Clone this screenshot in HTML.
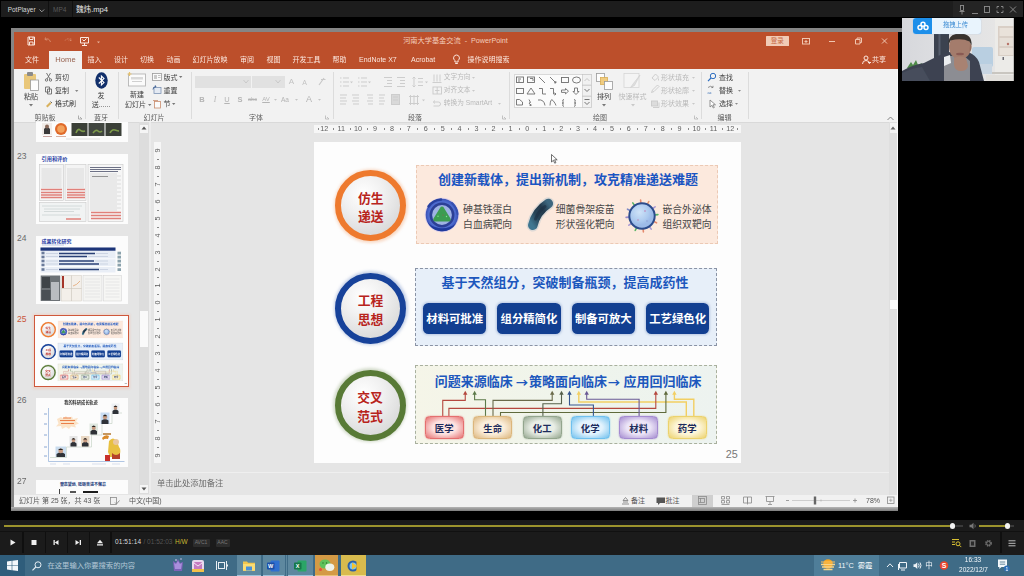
<!DOCTYPE html>
<html lang="zh-CN"><head><meta charset="utf-8"><title>PotPlayer</title><style>
html,body{margin:0;padding:0;background:#000;}
body{width:1024px;height:576px;position:relative;overflow:hidden;font-family:"Liberation Sans","Noto Sans CJK SC",sans-serif;}
.a{position:absolute;box-sizing:border-box;}
svg{position:absolute;overflow:visible;}
.b{font-weight:bold;}
</style></head><body>
<div class="a" style="left:-4px;top:-4px;width:1032px;height:584px;background:#000;filter:blur(0.45px);"><div class="a" style="left:4px;top:4px;width:1024px;height:576px;">
<div class="a" style="left:1px;top:1px;width:1022px;height:16px;background:#1d1d1d;"></div>
<div class="a" style="left:953px;top:1px;width:70px;height:16px;background:#242424;"></div>
<div class="a" style="left:48px;top:1px;width:1px;height:16px;background:#101010;"></div>
<div class="a" style="left:72px;top:1px;width:1px;height:16px;background:#101010;"></div>
<div class="a" style="top:5.50px;font-size:6.4px;line-height:8.4px;color:#d8d8d8;white-space:nowrap;left:7.8px;">PotPlayer</div>
<svg style="left:38.500px;top:8.500px" width="6" height="4" viewBox="0 0 6 4"><path d="M0.5 0.5 L2.800 2.800 L5.100 0.5" fill="none" stroke="#9a9a9a" stroke-width="1"/></svg>
<div class="a" style="top:5.75px;font-size:6.5px;line-height:8.5px;color:#5a5a5a;white-space:nowrap;left:53px;">MP4</div>
<div class="a" style="top:4.80px;font-size:7.6px;line-height:9.6px;color:#e4e4e4;white-space:nowrap;left:76px;">魏炜.mp4</div>
<svg style="left:955px;top:4px" width="64" height="12" viewBox="0 0 64 12">
<g stroke="#8e8e8e" stroke-width="0.900" fill="none">
<path d="M5 1.5h4M5.5 1.5v5h3v-5M4.5 7.5h5M7 7.5v3"/>
<path d="M17 9.5h6"/>
<rect x="29.5" y="2.5" width="5" height="6"/>
<path d="M42 4.5v-2h2M48 4.5v-2h-2M42 6.500v2h2M48 6.5v2h-2"/>
<path d="M55 2.500l6 6M61 2.500l-6 6"/>
</g></svg>
<div class="a" style="left:-4px;top:520px;width:1032px;height:35px;background:#1b1b1b;"></div>
<div class="a" style="left:-4px;top:531px;width:1032px;height:1px;background:#111;"></div>
<div class="a" style="left:4px;top:525px;width:949px;height:1.8px;background:#9c932d;"></div>
<div class="a" style="left:953px;top:525px;width:10px;height:2px;background:#3a3a3a;"></div>
<div class="a" style="left:949.5px;top:523.2px;width:5.6px;height:5.6px;background:#f2f2f2;border-radius:50%;"></div>
<svg style="left:969px;top:522px" width="8" height="8" viewBox="0 0 8 8"><path d="M0.500 2.800h1.800l2.200-2v6.400l-2.200-2h-1.800z" fill="#777"/><path d="M5.800 2.500q1 1.500 0 3" stroke="#777" fill="none" stroke-width="0.800"/></svg>
<div class="a" style="left:979px;top:525px;width:29px;height:1.8px;background:#9c932d;"></div>
<div class="a" style="left:1008px;top:525px;width:6px;height:2px;background:#3a3a3a;"></div>
<div class="a" style="left:1004.5px;top:523.2px;width:5.6px;height:5.6px;background:#f2f2f2;border-radius:50%;"></div>
<div class="a" style="left:22px;top:532px;width:1.5px;height:21px;background:#0f0f0f;"></div>
<div class="a" style="left:44.5px;top:532px;width:1.5px;height:21px;background:#0f0f0f;"></div>
<div class="a" style="left:66.5px;top:532px;width:1.5px;height:21px;background:#0f0f0f;"></div>
<div class="a" style="left:88.5px;top:532px;width:1.5px;height:21px;background:#0f0f0f;"></div>
<div class="a" style="left:110px;top:532px;width:1.5px;height:21px;background:#0f0f0f;"></div>
<div class="a" style="left:1000px;top:532px;width:1.5px;height:21px;background:#0f0f0f;"></div>
<svg style="left:0;top:532px" width="112" height="21" viewBox="0 0 112 21">
<g fill="#f0f0f0">
<path d="M10.500 7.500v6l5-3z"/>
<rect x="31.500" y="8" width="5" height="5"/>
<path d="M53.500 8h1.300v5h-1.300zM58.500 8v5l-3.700-2.500z"/>
<path d="M79.700 8h1.300v5h-1.300zM75.500 8v5l3.700-2.500z"/>
<path d="M97 11.200h6l-3-3.400zM97 12.200h6v1.200h-6z"/>
</g></svg>
<div class="a" style="top:538.45px;font-size:6.5px;line-height:8.5px;color:#dcdcdc;white-space:nowrap;left:115px;letter-spacing:0.1px;">01:51:14</div>
<div class="a" style="top:538.45px;font-size:6.5px;line-height:8.5px;color:#555;white-space:nowrap;left:143.5px;">/ 01:52:03</div>
<div class="a" style="top:538.45px;font-size:6.5px;line-height:8.5px;color:#c8b832;white-space:nowrap;left:175px;">H/W</div>
<div class="a" style="left:192.5px;top:538.5px;width:17px;height:8px;background:#2c2c2c;border-radius:1px;"></div>
<div class="a" style="top:539.20px;font-size:5px;line-height:7px;color:#777;white-space:nowrap;left:51px;width:300px;text-align:center;">AVC1</div>
<div class="a" style="left:215.5px;top:538.5px;width:14px;height:8px;background:#2c2c2c;border-radius:1px;"></div>
<div class="a" style="top:539.20px;font-size:5px;line-height:7px;color:#777;white-space:nowrap;left:72.5px;width:300px;text-align:center;">AAC</div>
<svg style="left:948px;top:536px" width="72" height="14" viewBox="0 0 72 14">
<g fill="none" stroke="#d8c032" stroke-width="1"><path d="M4 3.500h7M4 6h3M4 8.500h3"/><circle cx="10" cy="7.800" r="2"/><path d="M11.500 9.300l1.800 1.800"/></g>
<rect x="21.500" y="4" width="6" height="7" fill="#6f6f6f"/><rect x="23" y="5.500" width="3" height="4" fill="#2a2a2a"/>
<circle cx="40.500" cy="7.300" r="2.600" fill="none" stroke="#6f6f6f" stroke-width="1.600" stroke-dasharray="1.400 0.700"/><circle cx="40.500" cy="7.300" r="1.800" fill="none" stroke="#6f6f6f" stroke-width="1"/>
<path d="M60.500 4.800h7M60.500 7.300h7M60.500 9.800h7" stroke="#bdbdbd" stroke-width="1"/>
</svg>
<div class="a" style="left:-4px;top:555px;width:1032px;height:25px;background:#3f6b86;"></div>
<div class="a" style="left:-4px;top:555px;width:29px;height:25px;background:#2f5d7b;"></div>
<svg style="left:7px;top:560px" width="11" height="11" viewBox="0 0 11 11"><path d="M0 1.500l4.700-0.700v4.400h-4.700zM5.300 0.700l5.700-0.700v5.200h-5.700zM0 5.800h4.700v4.400l-4.700-0.700zM5.300 5.800h5.700v5.200l-5.700-0.700z" fill="#f4f7fa"/></svg>
<svg style="left:32px;top:560.5px" width="10" height="10" viewBox="0 0 10 10"><circle cx="6" cy="3.800" r="3" fill="none" stroke="#e6eef4" stroke-width="1"/><path d="M3.800 6l-3.300 3.400" stroke="#e6eef4" stroke-width="1.100"/></svg>
<div class="a" style="top:560.85px;font-size:7.3px;line-height:9.3px;color:#b4c8d6;white-space:nowrap;left:47.5px;">在这里输入你要搜索的内容</div>
<svg style="left:170px;top:557px" width="36" height="18" viewBox="0 0 36 18"><path d="M3 4l3 2 2-4 2 4 3-1-1 9h-8z" fill="#7d62b8"/><path d="M4 6l2 1 2-3 2 3 2-1-1 6h-6z" fill="#a98fdc"/><circle cx="6" cy="3" r="0.800" fill="#e8d9ff"/><circle cx="11" cy="2" r="0.700" fill="#e8d9ff"/><rect x="22" y="3" width="12" height="12" rx="2" fill="#e9d9ee"/><rect x="24" y="5" width="8" height="8" rx="1" fill="#c57bc0"/><path d="M24 6l4 3 4-3" stroke="#fff" fill="none" stroke-width="0.800"/><rect x="22" y="12" width="12" height="3" fill="#f2c14a"/></svg>
<svg style="left:216px;top:560px" width="12" height="11" viewBox="0 0 12 11"><g fill="none" stroke="#e8eef3" stroke-width="1"><rect x="2.500" y="2.500" width="6" height="6"/><path d="M0.500 1v9M10.500 1v9M11.500 4.500v2"/></g></svg>
<div class="a" style="left:237px;top:555px;width:24px;height:21px;background:#5e889f;"><svg style="left:6px;top:5px" width="12" height="11" viewBox="0 0 12 11"><path d="M0 1.500h4l1 1.200h7v8h-12z" fill="#f3c64d"/><path d="M0 4h12v6.700h-12z" fill="#fbdc74"/><rect x="3" y="6.500" width="6" height="4" fill="#4a90d9"/></svg></div>
<div class="a" style="left:262.5px;top:555px;width:21px;height:21px;background:#5e889f;"><svg style="left:4px;top:4.500px" width="13" height="12" viewBox="0 0 13 12"><rect x="3.500" y="0.500" width="9" height="11" rx="1" fill="#2f6fd0"/><rect x="0" y="2.500" width="7.500" height="7" rx="0.800" fill="#1a4fa8"/><text x="3.700" y="8.300" font-size="5.500" font-weight="bold" fill="#fff" text-anchor="middle" font-family="Liberation Sans, sans-serif">W</text></svg></div>
<div class="a" style="left:262px;top:555px;width:0.8px;height:21px;background:#3c6a86;"></div>
<div class="a" style="left:288px;top:555px;width:25px;height:21px;background:#5e889f;"><svg style="left:6px;top:4.500px" width="13" height="12" viewBox="0 0 13 12"><rect x="3.500" y="0.500" width="9" height="11" rx="1" fill="#2aa567"/><rect x="0" y="2.500" width="7.500" height="7" rx="0.800" fill="#16794a"/><text x="3.700" y="8.300" font-size="5.500" font-weight="bold" fill="#fff" text-anchor="middle" font-family="Liberation Sans, sans-serif">X</text></svg></div>
<div class="a" style="left:284px;top:555px;width:1px;height:21px;background:#5e889f;"></div>
<div class="a" style="left:286px;top:555px;width:1px;height:21px;background:#5e889f;"></div>
<div class="a" style="left:314.5px;top:555px;width:23px;height:21px;background:#d49a45;"><svg style="left:4px;top:4px" width="16" height="13" viewBox="0 0 16 13"><ellipse cx="6" cy="5" rx="5.500" ry="4.600" fill="#5fc25a"/><ellipse cx="10.800" cy="8.300" rx="4.500" ry="3.700" fill="#eef3ea"/><circle cx="4" cy="4" r="0.700" fill="#2d6e2b"/><circle cx="7.500" cy="4" r="0.700" fill="#2d6e2b"/><circle cx="1.500" cy="10.500" r="1.500" fill="#e2523c"/></svg></div>
<div class="a" style="left:341px;top:555px;width:25px;height:21px;background:#d8bb4e;"><svg style="left:6px;top:3.500px" width="14" height="14" viewBox="0 0 14 14"><circle cx="6" cy="7" r="5.500" fill="#2b5fa8"/><circle cx="6" cy="7" r="3.500" fill="#7fc4f0"/><path d="M5 3.500v7l5-3.500z" fill="#f2c230"/><rect x="9.500" y="3" width="3.500" height="10" fill="#e6b833"/></svg></div>
<div class="a" style="left:314.5px;top:574.5px;width:23px;height:1.5px;background:#e8c27a;"></div>
<div class="a" style="left:341px;top:574.5px;width:25px;height:1.5px;background:#f0de90;"></div>
<div class="a" style="left:237px;top:574.8px;width:24px;height:1.2px;background:#9cc3dc;"></div>
<div class="a" style="left:263px;top:574.8px;width:21px;height:1.2px;background:#9cc3dc;"></div>
<div class="a" style="left:288px;top:574.8px;width:25px;height:1.2px;background:#9cc3dc;"></div>
<div class="a" style="left:814px;top:555px;width:65px;height:21px;background:#4f7e99;"></div>
<svg style="left:820px;top:558px" width="16" height="14" viewBox="0 0 16 14"><circle cx="8" cy="6" r="4.800" fill="#f5a623"/><path d="M1 6.500h14M2 9h12M3.500 11.500h9" stroke="#f7d58a" stroke-width="1.300"/><path d="M1 4h14" stroke="#f9c260" stroke-width="1"/></svg>
<div class="a" style="top:560.85px;font-size:7.3px;line-height:9.3px;color:#f4f8fb;white-space:nowrap;left:838px;">11°C&nbsp;&nbsp;雾霾</div>
<svg style="left:885px;top:559px" width="70" height="13" viewBox="0 0 70 13"><g fill="none" stroke="#eef3f7" stroke-width="1"><path d="M2 8l3-3.200 3 3.200"/><path d="M14.500 3.500h7v5.500h-7zM16 11h4M13.500 5v6"/><path d="M28.500 5.200h1.600l2.200-2v6.800l-2.200-2h-1.600z" fill="#eef3f7" stroke="none"/><path d="M33.500 4.600q1.200 1.900 0 3.800M35 3.500q2 3 0 6"/></g><circle cx="59" cy="6.500" r="4.300" fill="#e8452c"/><text x="59" y="9" font-size="7" font-weight="bold" fill="#fff" text-anchor="middle" font-family="Liberation Sans, sans-serif">S</text></svg>
<div class="a" style="top:560.55px;font-size:7.5px;line-height:9.5px;color:#f4f8fb;white-space:nowrap;left:779px;width:300px;text-align:center;">中</div>
<div class="a" style="top:556.45px;font-size:6.5px;line-height:8.5px;color:#f4f8fb;white-space:nowrap;left:823px;width:300px;text-align:center;">16:33</div>
<div class="a" style="top:566.05px;font-size:6.5px;line-height:8.5px;color:#f4f8fb;white-space:nowrap;left:823.5px;width:300px;text-align:center;">2022/12/7</div>
<svg style="left:997px;top:559px" width="14" height="13" viewBox="0 0 14 13"><path d="M1 0.500h9v7.500h-5.500l-2.200 2v-2h-1.300z" fill="#f4f8fb"/><path d="M2.800 3h5.400M2.800 5.200h5.400" stroke="#3f6b86" stroke-width="0.800"/><circle cx="9.800" cy="9.500" r="3" fill="#2d6fb5"/><text x="9.800" y="11.500" font-size="5" fill="#fff" text-anchor="middle" font-family="Liberation Sans, sans-serif">1</text></svg>
<div class="a" style="left:10.7px;top:28px;width:891.3px;height:3.6px;background:#858585;"></div>
<div class="a" style="left:10.7px;top:28px;width:3.5px;height:483px;background:#858585;"></div>
<div class="a" style="left:10.7px;top:507px;width:887.3px;height:4px;background:linear-gradient(#b5b5b5,#7d7d7d);"></div>
<div class="a" style="left:14px;top:31.5px;width:884px;height:475.5px;background:#e5e5e5;"></div>
<div class="a" style="left:14px;top:31.5px;width:884px;height:37.5px;background:#bc4f2b;"></div>
<div class="a" style="left:14px;top:69px;width:884px;height:52.5px;background:#f2f2f2;"></div>
<div class="a" style="left:14px;top:121.5px;width:884px;height:1px;background:#d9d9d9;"></div>
<div class="a" style="left:14px;top:494.5px;width:884px;height:12.5px;background:#f1f1f1;"></div>
<svg style="left:26px;top:35px" width="80" height="12" viewBox="0 0 80 12">
<g fill="none" stroke="#fbe9e0" stroke-width="1">
<path d="M2 2h6.500l0 8h-6.500z"/><path d="M3.500 2v2.500h3.500v-2.500M3.500 10v-3h3.500v3"/>
<g stroke="#d98a6a"><path d="M19 4.500q4-2 5.500 2.500M19 4.500l0.500-2M19 4.500l2.200 0.600"/>
<path d="M45 5.500q-3-3.500-6.500 0.500M45 5.500l-0.300-2.300M45 5.500l-2.300 0.200" stroke-dasharray="1 0.800"/></g>
<path d="M54.500 2.500h8v5.500h-8zM58.500 8v2.200M56 10.500h5M56.500 4.500l1.500 1.500 2.500-2.500"/>
</g><path d="M71 6.500h3l-1.500 1.800z" fill="#e9b49d"/></svg>
<div class="a" style="top:35.70px;font-size:7.2px;line-height:9.2px;color:#f3cdbb;white-space:nowrap;left:305.5px;width:300px;text-align:center;">河南大学基金交流&nbsp; -&nbsp; PowerPoint</div>
<div class="a" style="left:765.5px;top:35.5px;width:23.3px;height:10.5px;background:#f1cbb6;border-radius:0.500px;"></div>
<div class="a" style="top:36.75px;font-size:6.5px;line-height:8.5px;color:#c86a45;white-space:nowrap;left:627.2px;width:300px;text-align:center;">登录</div>
<svg style="left:800px;top:35px" width="92" height="13" viewBox="0 0 92 13">
<g fill="none" stroke="#f0c6b0" stroke-width="1">
<rect x="2.500" y="3.500" width="7" height="5.500"/><path d="M4.500 6.500h3M6 5v3"/>
<path d="M29 6.500h6"/>
<path d="M55.500 4.500h4.500v4.500h-4.500zM57 4.500v-1.500h4.500v4.500h-1.500"/>
<path d="M82 3.500l5 5M87 3.500l-5 5"/>
</g></svg>
<div class="a" style="left:49px;top:51px;width:33px;height:18.5px;background:#f2f2f2;"></div>
<div class="a" style="top:55.00px;font-size:7px;line-height:9px;color:#fbe7de;white-space:nowrap;left:25px;">文件</div>
<div class="a" style="top:55.00px;font-size:7px;line-height:9px;color:#fbe7de;white-space:nowrap;left:87.5px;">插入</div>
<div class="a" style="top:55.00px;font-size:7px;line-height:9px;color:#fbe7de;white-space:nowrap;left:114px;">设计</div>
<div class="a" style="top:55.00px;font-size:7px;line-height:9px;color:#fbe7de;white-space:nowrap;left:140px;">切换</div>
<div class="a" style="top:55.00px;font-size:7px;line-height:9px;color:#fbe7de;white-space:nowrap;left:166.5px;">动画</div>
<div class="a" style="top:55.00px;font-size:7px;line-height:9px;color:#fbe7de;white-space:nowrap;left:192.5px;">幻灯片放映</div>
<div class="a" style="top:55.00px;font-size:7px;line-height:9px;color:#fbe7de;white-space:nowrap;left:240px;">审阅</div>
<div class="a" style="top:55.00px;font-size:7px;line-height:9px;color:#fbe7de;white-space:nowrap;left:266.5px;">视图</div>
<div class="a" style="top:55.00px;font-size:7px;line-height:9px;color:#fbe7de;white-space:nowrap;left:292.5px;">开发工具</div>
<div class="a" style="top:55.00px;font-size:7px;line-height:9px;color:#fbe7de;white-space:nowrap;left:332.5px;">帮助</div>
<div class="a" style="top:55.00px;font-size:7px;line-height:9px;color:#fbe7de;white-space:nowrap;left:359px;">EndNote X7</div>
<div class="a" style="top:55.00px;font-size:7px;line-height:9px;color:#fbe7de;white-space:nowrap;left:411px;">Acrobat</div>
<div class="a" style="top:55.00px;font-size:7px;line-height:9px;color:#fbe7de;white-space:nowrap;left:467.5px;">操作说明搜索</div>
<div class="a" style="top:54.70px;font-size:7.6px;line-height:9.6px;color:#96614e;white-space:nowrap;left:-84.5px;width:300px;text-align:center;">Home</div>
<svg style="left:452px;top:54px" width="9" height="11" viewBox="0 0 9 11"><path d="M4.500 1a3 3 0 0 1 1.600 5.500v1.500h-3.200v-1.500a3 3 0 0 1 1.600-5.500zM3.200 9.500h2.600" fill="none" stroke="#fbe7de" stroke-width="1"/></svg>
<svg style="left:860.500px;top:55px" width="10" height="10" viewBox="0 0 10 10"><circle cx="5" cy="3" r="2" fill="none" stroke="#fbe7de" stroke-width="1"/><path d="M1.500 9q0-3.500 3.500-3.500t3.500 3.500M7 7.500h3" fill="none" stroke="#fbe7de" stroke-width="1"/></svg>
<div class="a" style="top:55.20px;font-size:7px;line-height:9px;color:#fbe7de;white-space:nowrap;left:872px;">共享</div>
<div class="a" style="left:85px;top:72px;width:1px;height:47px;background:#dcdcdc;"></div>
<div class="a" style="left:117.5px;top:72px;width:1px;height:47px;background:#dcdcdc;"></div>
<div class="a" style="left:190.5px;top:72px;width:1px;height:47px;background:#dcdcdc;"></div>
<div class="a" style="left:332.5px;top:72px;width:1px;height:47px;background:#dcdcdc;"></div>
<div class="a" style="left:509px;top:72px;width:1px;height:47px;background:#dcdcdc;"></div>
<div class="a" style="left:701px;top:72px;width:1px;height:47px;background:#dcdcdc;"></div>
<div class="a" style="left:747.5px;top:72px;width:1px;height:47px;background:#dcdcdc;"></div>
<svg style="left:23px;top:71px" width="17" height="21" viewBox="0 0 17 21"><rect x="1" y="3" width="12" height="15" rx="1" fill="#e9c77a"/><rect x="4" y="1" width="6" height="4" rx="1" fill="#8a8a8a"/><rect x="7.500" y="9" width="8" height="10.500" fill="#fdfdfd" stroke="#9a9a9a" stroke-width="0.800"/></svg>
<div class="a" style="top:91.80px;font-size:7px;line-height:9px;color:#3e3e3e;white-space:nowrap;left:-119px;width:300px;text-align:center;">粘贴</div>
<svg style="left:29px;top:104px" width="4" height="3"><path d="M0 0h4l-2 2.500z" fill="#777"/></svg>
<svg style="left:44px;top:72px" width="9" height="38" viewBox="0 0 9 38"><g fill="none" stroke="#6a6a6a" stroke-width="0.900"><path d="M2.500 1l3.500 6M6.500 1l-3.500 6"/><circle cx="2.500" cy="8" r="1.200"/><circle cx="6.500" cy="8" r="1.200"/><path d="M1.500 15h4v5h-4zM3.500 17h4v5h-4z" fill="#f7f7f7"/></g><path d="M2 34l4-4 1.500 1.500-4 4z" fill="#d9b25e"/><path d="M6.500 29.500l1.500 1.500" stroke="#6a6a6a"/></svg>
<div class="a" style="top:72.50px;font-size:7px;line-height:9px;color:#3e3e3e;white-space:nowrap;left:55px;">剪切</div>
<div class="a" style="top:85.80px;font-size:7px;line-height:9px;color:#3e3e3e;white-space:nowrap;left:55px;">复制</div>
<div class="a" style="top:99.20px;font-size:7px;line-height:9px;color:#3e3e3e;white-space:nowrap;left:55px;">格式刷</div>
<svg style="left:75px;top:89.500px" width="4" height="3"><path d="M0 0h3.400l-1.700 2z" fill="#888"/></svg>
<div class="a" style="top:112.80px;font-size:7px;line-height:9px;color:#5c5c5c;white-space:nowrap;left:-105px;width:300px;text-align:center;">剪贴板</div>
<svg style="left:78px;top:115px" width="5" height="5"><path d="M0.500 0.500v3.500h3.500M2 2l2 2" fill="none" stroke="#9a9a9a" stroke-width="0.800"/></svg>
<svg style="left:94.500px;top:71.500px" width="13" height="17" viewBox="0 0 13 17"><ellipse cx="6.500" cy="8.500" rx="6.200" ry="8.300" fill="#12306b"/><path d="M3.800 5.500l5.200 5-2.600 2.500v-9l2.600 2.500-5.200 5" fill="none" stroke="#fff" stroke-width="1.100"/></svg>
<div class="a" style="top:91.20px;font-size:7px;line-height:9px;color:#3e3e3e;white-space:nowrap;left:-49px;width:300px;text-align:center;">发</div>
<div class="a" style="top:100.00px;font-size:7px;line-height:9px;color:#3e3e3e;white-space:nowrap;left:-49px;width:300px;text-align:center;">送......</div>
<div class="a" style="top:112.80px;font-size:7px;line-height:9px;color:#5c5c5c;white-space:nowrap;left:-49px;width:300px;text-align:center;">蓝牙</div>
<svg style="left:127px;top:72px" width="20" height="15" viewBox="0 0 20 15"><rect x="1.500" y="2" width="17" height="12" fill="#fbfbfb" stroke="#b5b5b5" stroke-width="0.900"/><rect x="4" y="5" width="12" height="2.500" fill="#d9d9d9"/><rect x="5" y="9" width="10" height="1" fill="#d0d0d0"/><path d="M2.500 0v4M0.500 2h4" stroke="#e7c26d" stroke-width="1.200"/></svg>
<div class="a" style="top:90.20px;font-size:7px;line-height:9px;color:#3e3e3e;white-space:nowrap;left:-13px;width:300px;text-align:center;">新建</div>
<div class="a" style="top:100.00px;font-size:7px;line-height:9px;color:#3e3e3e;white-space:nowrap;left:-14.5px;width:300px;text-align:center;">幻灯片</div>
<svg style="left:147.500px;top:104px" width="4" height="3"><path d="M0 0h3.400l-1.700 2z" fill="#777"/></svg>
<svg style="left:152px;top:72px" width="10" height="38" viewBox="0 0 10 38"><rect x="0.500" y="1.500" width="9" height="7" fill="#fafafa" stroke="#9c9c9c" stroke-width="0.800"/><rect x="2" y="3" width="3" height="4" fill="#c9c9c9"/><path d="M6 3.500h2.500M6 5.500h2.500" stroke="#aaa" stroke-width="0.700"/><rect x="2" y="15.500" width="7" height="6" fill="#e4eaf3" stroke="#7d93b3" stroke-width="0.800"/><path d="M1 17.500a3 3 0 0 1 3-3l-0.800-1.200M4 14.500l-1.300 0.900" fill="none" stroke="#3c5f94" stroke-width="0.900"/><rect x="2.500" y="29.500" width="6" height="6.500" fill="#fbfbfb" stroke="#c98c6d" stroke-width="0.800"/><path d="M1 28.500h5" stroke="#c98c6d" stroke-width="0.800"/></svg>
<div class="a" style="top:72.50px;font-size:7px;line-height:9px;color:#3e3e3e;white-space:nowrap;left:163.5px;">版式</div>
<div class="a" style="top:85.80px;font-size:7px;line-height:9px;color:#3e3e3e;white-space:nowrap;left:163.5px;">重置</div>
<div class="a" style="top:99.20px;font-size:7px;line-height:9px;color:#3e3e3e;white-space:nowrap;left:163.5px;">节</div>
<svg style="left:179px;top:76px" width="4" height="3"><path d="M0 0h3.400l-1.700 2z" fill="#777"/></svg>
<svg style="left:172px;top:103px" width="4" height="3"><path d="M0 0h3.400l-1.700 2z" fill="#777"/></svg>
<div class="a" style="top:112.80px;font-size:7px;line-height:9px;color:#5c5c5c;white-space:nowrap;left:4px;width:300px;text-align:center;">幻灯片</div>
<div class="a" style="left:195px;top:75.5px;width:56px;height:12.5px;background:#e1e1e1;"></div>
<div class="a" style="left:252px;top:75.5px;width:32.5px;height:12.5px;background:#e1e1e1;"></div>
<svg style="left:243px;top:79px" width="40" height="6" viewBox="0 0 40 6"><path d="M0.500 1l2.500 3 2.500-3M32.500 1l2.500 3 2.500-3" fill="none" stroke="#c6c6c6" stroke-width="0.900"/></svg>
<div class="a" style="top:77.00px;font-size:8px;line-height:10px;color:#c2c2c2;white-space:nowrap;left:141.5px;width:300px;text-align:center;">A</div>
<div class="a" style="top:78.00px;font-size:7px;line-height:9px;color:#c2c2c2;white-space:nowrap;left:154.5px;width:300px;text-align:center;">A</div>
<svg style="left:317px;top:77px" width="10" height="9" viewBox="0 0 10 9"><path d="M2 8l5-7M4 2.500h4.500" stroke="#c8c8c8" stroke-width="1.200" fill="none"/></svg>
<div class="a" style="top:94.75px;font-size:7.5px;line-height:9.5px;color:#b4b4b4;white-space:nowrap;left:52px;width:300px;text-align:center;font-weight:bold;">B</div>
<div class="a" style="top:94.75px;font-size:7.5px;line-height:9.5px;color:#b4b4b4;white-space:nowrap;left:65px;width:300px;text-align:center;font-style:italic;font-family:'Liberation Serif',serif;">I</div>
<div class="a" style="top:94.75px;font-size:7.5px;line-height:9.5px;color:#b4b4b4;white-space:nowrap;left:77px;width:300px;text-align:center;text-decoration:underline;">U</div>
<div class="a" style="top:94.75px;font-size:7.5px;line-height:9.5px;color:#b4b4b4;white-space:nowrap;left:90px;width:300px;text-align:center;font-weight:bold;">S</div>
<div class="a" style="top:94.75px;font-size:7.5px;line-height:9.5px;color:#b4b4b4;white-space:nowrap;left:102.5px;width:300px;text-align:center;text-decoration:line-through;font-size:5.500px;">abc</div>
<div class="a" style="top:94.75px;font-size:7.5px;line-height:9.5px;color:#b4b4b4;white-space:nowrap;left:116px;width:300px;text-align:center;font-size:6px;text-decoration:underline;">AV</div>
<div class="a" style="top:94.75px;font-size:7.5px;line-height:9.5px;color:#b4b4b4;white-space:nowrap;left:135px;width:300px;text-align:center;font-size:6.500px;">Aa</div>
<div class="a" style="top:94.75px;font-size:7.5px;line-height:9.5px;color:#b4b4b4;white-space:nowrap;left:159px;width:300px;text-align:center;font-size:9px;">A</div>
<svg style="left:274px;top:99px" width="4" height="3"><path d="M0 0h3l-1.500 1.800z" fill="#c4c4c4"/></svg>
<svg style="left:294.5px;top:99px" width="4" height="3"><path d="M0 0h3l-1.500 1.800z" fill="#c4c4c4"/></svg>
<svg style="left:318px;top:99px" width="4" height="3"><path d="M0 0h3l-1.500 1.800z" fill="#c4c4c4"/></svg>
<div class="a" style="top:112.80px;font-size:7px;line-height:9px;color:#5c5c5c;white-space:nowrap;left:106px;width:300px;text-align:center;">字体</div>
<svg style="left:325px;top:115px" width="5" height="5"><path d="M0.500 0.500v3.500h3.500M2 2l2 2" fill="none" stroke="#b5b5b5" stroke-width="0.800"/></svg>
<svg style="left:337px;top:74px" width="170" height="36" viewBox="0 0 170 36"><g stroke="#cdcdcd" stroke-width="1" fill="none"><path d="M3 4h1.500M3 8h1.500M3 12h1.500M6 4h6M6 8h6M6 12h6"/><path d="M21 4h1.500M21 8h1.500M21 12h1.500M24 4h6M24 8h6M24 12h6"/><path d="M47 3.500h8M50 6.500h5M50 9.500h5M47 12.500h8"/><path d="M60 3.500h8M63 6.500h5M63 9.500h5M60 12.500h8"/><path d="M77 3v10M75.500 4.500l1.500-1.500 1.500 1.500M75.500 11.500l1.500 1.500 1.500-1.500M81 4.500h5M81 8h5M81 11.500h5"/><path d="M3 21h7M3 24h6M3 27h7M3 30h6"/><path d="M15 21h7M16 24h6M15 27h7M16 30h6"/><path d="M30 21h6M31 24h5M30 27h6M31 30h5"/><path d="M42 21h6M42 24h5M42 27h6M42 30h5"/><rect x="54.500" y="20.500" width="8" height="10" fill="#d9d9d9"/><path d="M56 23h5M56 26h5"/><path d="M73.500 21v10M77 21v10M80.500 21v10M72 22.500h10M72 29.500h10"/></g><path d="M13 7.500h3l-1.500 1.800zM31 7.500h3l-1.500 1.800zM88 7.500h3l-1.500 1.800zM85 25.500h3l-1.500 1.800z" fill="#c9c9c9"/></svg>
<svg style="left:431.500px;top:73px" width="11" height="36" viewBox="0 0 11 36"><g fill="none" stroke="#c9c9c9" stroke-width="0.900"><path d="M2 1.500v7M5 1.500v7M8 1.500v7M0.500 9.500h9"/><rect x="1" y="14" width="8.500" height="7"/><path d="M5.200 14v7M3 17.500h4.500"/><path d="M1.500 29h5a2 2 0 0 1 0 4h-5M3 27.500l-1.700 1.500 1.700 1.500"/></g></svg>
<div class="a" style="top:72.65px;font-size:6.7px;line-height:8.7px;color:#b9b9b9;white-space:nowrap;left:443.8px;">文字方向</div>
<div class="a" style="top:85.95px;font-size:6.7px;line-height:8.7px;color:#b9b9b9;white-space:nowrap;left:443.8px;">对齐文本</div>
<div class="a" style="top:99.35px;font-size:6.7px;line-height:8.7px;color:#b9b9b9;white-space:nowrap;left:443.8px;">转换为 SmartArt</div>
<svg style="left:472px;top:76.5px" width="4" height="3"><path d="M0 0h3l-1.500 1.800z" fill="#c9c9c9"/></svg>
<svg style="left:472px;top:89.8px" width="4" height="3"><path d="M0 0h3l-1.500 1.800z" fill="#c9c9c9"/></svg>
<svg style="left:497.5px;top:103.2px" width="4" height="3"><path d="M0 0h3l-1.500 1.800z" fill="#c9c9c9"/></svg>
<div class="a" style="top:112.80px;font-size:7px;line-height:9px;color:#5c5c5c;white-space:nowrap;left:265px;width:300px;text-align:center;">段落</div>
<svg style="left:502px;top:115px" width="5" height="5"><path d="M0.500 0.500v3.500h3.500M2 2l2 2" fill="none" stroke="#b5b5b5" stroke-width="0.800"/></svg>
<div class="a" style="left:514px;top:74px;width:77.5px;height:33.5px;background:#fbfbfb;border:0.700px solid #d8d8d8;"></div>
<svg style="left:514px;top:74px" width="78" height="34" viewBox="0 0 78 34"><g fill="none" stroke="#6e6e6e" stroke-width="0.900">
<rect x="2.500" y="3" width="7" height="5.500"/><path d="M4 5h3M4 7h2"/><rect x="13.500" y="3" width="7" height="5.500"/><path d="M16 4.500h3v2.500"/>
<path d="M25 3l6 6M36 3l6 6M42 9l-0.300-2M42 9l-2-0.300"/><rect x="47.500" y="3.500" width="7" height="5"/><ellipse cx="62.500" cy="6" rx="4" ry="3"/>
<rect x="2.500" y="14.500" width="7" height="5"/><path d="M17 14l4 6h-8z"/><path d="M25 14.500h3.500v5.500h3.500M36 14.500h3.500v5.500h2.500M42 20l-1.500-1.200M42 20l-1.500 1.200"/>
<path d="M47.500 16h4v-1.500l3 2.700-3 2.700v-1.500h-4z"/><path d="M60.500 14h3v3.500h1.500l-3 3-3-3h1.500z"/>
<path d="M2.500 31v-5.500h3l3 2.500v3z"/><path d="M15 25.500l1.500 3-1.500 0.500 2 2.500M17 31.500l-0.300-1.500M17 31.500l-1.500-0.200"/><path d="M24 26q6-1 7 5.500M36 31.500q0.500-8 3-5t3 5M50 25.500q-2 0-1 2t-1 1.500q2 0 1 1.500t1 2M60 25.500q2 0 1 2t1 1.500q-2 0-1 1.500t-1 2"/>
</g><g fill="#f1f1f1" stroke="#c4c4c4" stroke-width="0.600"><rect x="68.500" y="0.500" width="9" height="10.500"/><rect x="68.500" y="11.500" width="9" height="10.500"/><rect x="68.500" y="22.500" width="9" height="11"/></g>
<path d="M70.500 7l2.500-2.500 2.500 2.500" fill="none" stroke="#c2c2c2" stroke-width="0.900"/><path d="M70.500 15l2.500 2.500 2.500-2.500M70.500 28l2.500 2.500 2.500-2.500M70.500 25.500h5" fill="none" stroke="#666" stroke-width="0.900"/></svg>
<svg style="left:595px;top:72px" width="18" height="19" viewBox="0 0 18 19"><rect x="1.500" y="1.500" width="8" height="8" fill="#fdfdfd" stroke="#9a9a9a" stroke-width="0.800"/><rect x="5.500" y="5.500" width="7" height="7" fill="#f0cc80" stroke="#d9ad55" stroke-width="0.800"/><rect x="9.500" y="9.500" width="8" height="8" fill="#fdfdfd" stroke="#9a9a9a" stroke-width="0.800"/></svg>
<div class="a" style="top:91.80px;font-size:7px;line-height:9px;color:#3e3e3e;white-space:nowrap;left:454px;width:300px;text-align:center;">排列</div>
<svg style="left:602px;top:104px" width="4" height="3"><path d="M0 0h4l-2 2.500z" fill="#777"/></svg>
<svg style="left:622px;top:72px" width="21" height="20" viewBox="0 0 21 20"><rect x="2" y="1.500" width="15" height="14" fill="#f4f4f4" stroke="#d6d6d6" stroke-width="0.800"/><path d="M18 3l-7 9-2.500 3.500 4-2z" fill="#dedede" stroke="#cfcfcf" stroke-width="0.600"/></svg>
<div class="a" style="top:91.80px;font-size:7px;line-height:9px;color:#b9b9b9;white-space:nowrap;left:482.5px;width:300px;text-align:center;">快速样式</div>
<svg style="left:631px;top:104px" width="4" height="3"><path d="M0 0h4l-2 2.500z" fill="#c9c9c9"/></svg>
<svg style="left:650px;top:72px" width="10" height="38" viewBox="0 0 10 38"><g fill="none" stroke="#c9c9c9" stroke-width="0.900"><path d="M2 6l3.500-4 3 3-3.500 3.500zM8.500 6.500v2"/><path d="M1.500 20.500l1-2.500 5-5 1.500 1.500-5 5z"/><rect x="1.500" y="29" width="6" height="5" fill="#dcdcdc"/><path d="M3 35.500h6v-5"/></g></svg>
<div class="a" style="top:72.50px;font-size:7px;line-height:9px;color:#b9b9b9;white-space:nowrap;left:661px;">形状填充</div>
<div class="a" style="top:85.80px;font-size:7px;line-height:9px;color:#b9b9b9;white-space:nowrap;left:661px;">形状轮廓</div>
<div class="a" style="top:99.20px;font-size:7px;line-height:9px;color:#b9b9b9;white-space:nowrap;left:661px;">形状效果</div>
<svg style="left:691.500px;top:76.5px" width="4" height="3"><path d="M0 0h3l-1.500 1.800z" fill="#c9c9c9"/></svg>
<svg style="left:691.500px;top:89.8px" width="4" height="3"><path d="M0 0h3l-1.500 1.800z" fill="#c9c9c9"/></svg>
<svg style="left:691.500px;top:103.2px" width="4" height="3"><path d="M0 0h3l-1.500 1.800z" fill="#c9c9c9"/></svg>
<div class="a" style="top:112.80px;font-size:7px;line-height:9px;color:#5c5c5c;white-space:nowrap;left:450px;width:300px;text-align:center;">绘图</div>
<svg style="left:694px;top:115px" width="5" height="5"><path d="M0.500 0.500v3.500h3.500M2 2l2 2" fill="none" stroke="#b5b5b5" stroke-width="0.800"/></svg>
<svg style="left:707px;top:72px" width="10" height="38" viewBox="0 0 10 38"><circle cx="6" cy="4" r="2.700" fill="none" stroke="#2f6fc0" stroke-width="1"/><path d="M4 6l-3 3.200" stroke="#2f6fc0" stroke-width="1.200"/><g fill="none" stroke="#7a7a7a" stroke-width="0.800"><path d="M1 15.500q2.500-2.500 5 0M6 15.500l0-1.700M6 15.500l-1.600 0.100"/><text x="0.500" y="21.500" font-size="4" fill="#3a6fb5" stroke="none" font-family="Liberation Sans, sans-serif">ac</text><path d="M3 28v7l2-1.700 1.300 2.700 1-0.500-1.300-2.700h2.500z" fill="#fff"/></g></svg>
<div class="a" style="top:72.50px;font-size:7px;line-height:9px;color:#3e3e3e;white-space:nowrap;left:719px;">查找</div>
<div class="a" style="top:85.80px;font-size:7px;line-height:9px;color:#3e3e3e;white-space:nowrap;left:719px;">替换</div>
<div class="a" style="top:99.20px;font-size:7px;line-height:9px;color:#3e3e3e;white-space:nowrap;left:719px;">选择</div>
<svg style="left:737.500px;top:89.800px" width="4" height="3"><path d="M0 0h3l-1.500 1.800z" fill="#888"/></svg>
<svg style="left:734.500px;top:103.200px" width="4" height="3"><path d="M0 0h3l-1.500 1.800z" fill="#888"/></svg>
<div class="a" style="top:112.80px;font-size:7px;line-height:9px;color:#5c5c5c;white-space:nowrap;left:574.5px;width:300px;text-align:center;">编辑</div>
<svg style="left:886.500px;top:116px" width="7" height="5"><path d="M0.500 4l3-3 3 3" fill="none" stroke="#777" stroke-width="0.900"/></svg>
<div class="a" style="left:138.5px;top:122px;width:10.5px;height:372px;background:#dddddd;"></div>
<div class="a" style="left:139.5px;top:125px;width:8.3px;height:7.8px;background:#f5f5f5;"></div>
<svg style="left:141px;top:126px" width="6" height="4"><path d="M0.500 3.500h5l-2.500-3z" fill="#555"/></svg>
<div class="a" style="left:139.5px;top:485px;width:8.3px;height:7.8px;background:#f5f5f5;"></div>
<svg style="left:141px;top:487px" width="6" height="4"><path d="M0.500 0.500h5l-2.500 3z" fill="#555"/></svg>
<div class="a" style="left:140px;top:310.5px;width:7.5px;height:36.5px;background:#fafafa;"></div>
<div class="a" style="left:149px;top:122px;width:2px;height:372px;background:#ececec;"></div>
<div class="a" style="left:314px;top:124.5px;width:427.3px;height:8px;background:#f6f6f6;"></div>
<div class="a" style="left:736.5px;top:127.5px;width:0.8px;height:2px;background:#888;"></div>
<div class="a" style="top:123.90px;font-size:7.2px;line-height:9.2px;color:#5e5e5e;white-space:nowrap;left:174.25999999999993px;width:300px;text-align:center;">12</div>
<div class="a" style="left:332.7px;top:127.5px;width:0.8px;height:2px;background:#888;"></div>
<div class="a" style="top:123.90px;font-size:7.2px;line-height:9.2px;color:#5e5e5e;white-space:nowrap;left:191.17999999999995px;width:300px;text-align:center;">11</div>
<div class="a" style="left:349.6px;top:127.5px;width:0.8px;height:2px;background:#888;"></div>
<div class="a" style="top:123.90px;font-size:7.2px;line-height:9.2px;color:#5e5e5e;white-space:nowrap;left:208.0999999999999px;width:300px;text-align:center;">10</div>
<div class="a" style="left:366.6px;top:127.5px;width:0.8px;height:2px;background:#888;"></div>
<div class="a" style="top:123.90px;font-size:7.2px;line-height:9.2px;color:#5e5e5e;white-space:nowrap;left:225.01999999999992px;width:300px;text-align:center;">9</div>
<div class="a" style="left:383.5px;top:127.5px;width:0.8px;height:2px;background:#888;"></div>
<div class="a" style="top:123.90px;font-size:7.2px;line-height:9.2px;color:#5e5e5e;white-space:nowrap;left:241.93999999999994px;width:300px;text-align:center;">8</div>
<div class="a" style="left:400.4px;top:127.5px;width:0.8px;height:2px;background:#888;"></div>
<div class="a" style="top:123.90px;font-size:7.2px;line-height:9.2px;color:#5e5e5e;white-space:nowrap;left:258.85999999999996px;width:300px;text-align:center;">7</div>
<div class="a" style="left:417.3px;top:127.5px;width:0.8px;height:2px;background:#888;"></div>
<div class="a" style="top:123.90px;font-size:7.2px;line-height:9.2px;color:#5e5e5e;white-space:nowrap;left:275.78px;width:300px;text-align:center;">6</div>
<div class="a" style="left:434.2px;top:127.5px;width:0.8px;height:2px;background:#888;"></div>
<div class="a" style="top:123.90px;font-size:7.2px;line-height:9.2px;color:#5e5e5e;white-space:nowrap;left:292.69999999999993px;width:300px;text-align:center;">5</div>
<div class="a" style="left:451.2px;top:127.5px;width:0.8px;height:2px;background:#888;"></div>
<div class="a" style="top:123.90px;font-size:7.2px;line-height:9.2px;color:#5e5e5e;white-space:nowrap;left:309.61999999999995px;width:300px;text-align:center;">4</div>
<div class="a" style="left:468.1px;top:127.5px;width:0.8px;height:2px;background:#888;"></div>
<div class="a" style="top:123.90px;font-size:7.2px;line-height:9.2px;color:#5e5e5e;white-space:nowrap;left:326.53999999999996px;width:300px;text-align:center;">3</div>
<div class="a" style="left:485.0px;top:127.5px;width:0.8px;height:2px;background:#888;"></div>
<div class="a" style="top:123.90px;font-size:7.2px;line-height:9.2px;color:#5e5e5e;white-space:nowrap;left:343.4599999999999px;width:300px;text-align:center;">2</div>
<div class="a" style="left:501.9px;top:127.5px;width:0.8px;height:2px;background:#888;"></div>
<div class="a" style="top:123.90px;font-size:7.2px;line-height:9.2px;color:#5e5e5e;white-space:nowrap;left:360.37999999999994px;width:300px;text-align:center;">1</div>
<div class="a" style="left:518.8px;top:127.5px;width:0.8px;height:2px;background:#888;"></div>
<div class="a" style="top:123.90px;font-size:7.2px;line-height:9.2px;color:#5e5e5e;white-space:nowrap;left:377.29999999999995px;width:300px;text-align:center;">0</div>
<div class="a" style="left:535.8px;top:127.5px;width:0.8px;height:2px;background:#888;"></div>
<div class="a" style="top:123.90px;font-size:7.2px;line-height:9.2px;color:#5e5e5e;white-space:nowrap;left:394.2199999999999px;width:300px;text-align:center;">1</div>
<div class="a" style="left:552.7px;top:127.5px;width:0.8px;height:2px;background:#888;"></div>
<div class="a" style="top:123.90px;font-size:7.2px;line-height:9.2px;color:#5e5e5e;white-space:nowrap;left:411.14px;width:300px;text-align:center;">2</div>
<div class="a" style="left:569.6px;top:127.5px;width:0.8px;height:2px;background:#888;"></div>
<div class="a" style="top:123.90px;font-size:7.2px;line-height:9.2px;color:#5e5e5e;white-space:nowrap;left:428.05999999999995px;width:300px;text-align:center;">3</div>
<div class="a" style="left:586.5px;top:127.5px;width:0.8px;height:2px;background:#888;"></div>
<div class="a" style="top:123.90px;font-size:7.2px;line-height:9.2px;color:#5e5e5e;white-space:nowrap;left:444.98px;width:300px;text-align:center;">4</div>
<div class="a" style="left:603.4px;top:127.5px;width:0.8px;height:2px;background:#888;"></div>
<div class="a" style="top:123.90px;font-size:7.2px;line-height:9.2px;color:#5e5e5e;white-space:nowrap;left:461.9px;width:300px;text-align:center;">5</div>
<div class="a" style="left:620.4px;top:127.5px;width:0.8px;height:2px;background:#888;"></div>
<div class="a" style="top:123.90px;font-size:7.2px;line-height:9.2px;color:#5e5e5e;white-space:nowrap;left:478.81999999999994px;width:300px;text-align:center;">6</div>
<div class="a" style="left:637.3px;top:127.5px;width:0.8px;height:2px;background:#888;"></div>
<div class="a" style="top:123.90px;font-size:7.2px;line-height:9.2px;color:#5e5e5e;white-space:nowrap;left:495.74px;width:300px;text-align:center;">7</div>
<div class="a" style="left:654.2px;top:127.5px;width:0.8px;height:2px;background:#888;"></div>
<div class="a" style="top:123.90px;font-size:7.2px;line-height:9.2px;color:#5e5e5e;white-space:nowrap;left:512.66px;width:300px;text-align:center;">8</div>
<div class="a" style="left:671.1px;top:127.5px;width:0.8px;height:2px;background:#888;"></div>
<div class="a" style="top:123.90px;font-size:7.2px;line-height:9.2px;color:#5e5e5e;white-space:nowrap;left:529.5799999999999px;width:300px;text-align:center;">9</div>
<div class="a" style="left:688.0px;top:127.5px;width:0.8px;height:2px;background:#888;"></div>
<div class="a" style="top:123.90px;font-size:7.2px;line-height:9.2px;color:#5e5e5e;white-space:nowrap;left:546.5px;width:300px;text-align:center;">10</div>
<div class="a" style="left:705.0px;top:127.5px;width:0.8px;height:2px;background:#888;"></div>
<div class="a" style="top:123.90px;font-size:7.2px;line-height:9.2px;color:#5e5e5e;white-space:nowrap;left:563.42px;width:300px;text-align:center;">11</div>
<div class="a" style="left:721.9px;top:127.5px;width:0.8px;height:2px;background:#888;"></div>
<div class="a" style="top:123.90px;font-size:7.2px;line-height:9.2px;color:#5e5e5e;white-space:nowrap;left:580.3399999999999px;width:300px;text-align:center;">12</div>
<div class="a" style="left:317.5px;top:127.5px;width:0.8px;height:2px;background:#888;"></div>
<div class="a" style="left:153.5px;top:142px;width:7.5px;height:321px;background:#f6f6f6;"></div>
<div class="a" style="left:137.3px;top:146.0px;width:40px;height:9px;line-height:9px;text-align:center;font-size:7.200px;color:#5e5e5e;transform:rotate(-90deg);">9</div>
<div class="a" style="left:156.5px;top:159.0px;width:2px;height:0.8px;background:#888;"></div>
<div class="a" style="left:137.3px;top:162.9px;width:40px;height:9px;line-height:9px;text-align:center;font-size:7.200px;color:#5e5e5e;transform:rotate(-90deg);">8</div>
<div class="a" style="left:156.5px;top:175.9px;width:2px;height:0.8px;background:#888;"></div>
<div class="a" style="left:137.3px;top:179.9px;width:40px;height:9px;line-height:9px;text-align:center;font-size:7.200px;color:#5e5e5e;transform:rotate(-90deg);">7</div>
<div class="a" style="left:156.5px;top:192.8px;width:2px;height:0.8px;background:#888;"></div>
<div class="a" style="left:137.3px;top:196.8px;width:40px;height:9px;line-height:9px;text-align:center;font-size:7.200px;color:#5e5e5e;transform:rotate(-90deg);">6</div>
<div class="a" style="left:156.5px;top:209.7px;width:2px;height:0.8px;background:#888;"></div>
<div class="a" style="left:137.3px;top:213.7px;width:40px;height:9px;line-height:9px;text-align:center;font-size:7.200px;color:#5e5e5e;transform:rotate(-90deg);">5</div>
<div class="a" style="left:156.5px;top:226.7px;width:2px;height:0.8px;background:#888;"></div>
<div class="a" style="left:137.3px;top:230.6px;width:40px;height:9px;line-height:9px;text-align:center;font-size:7.200px;color:#5e5e5e;transform:rotate(-90deg);">4</div>
<div class="a" style="left:156.5px;top:243.6px;width:2px;height:0.8px;background:#888;"></div>
<div class="a" style="left:137.3px;top:247.5px;width:40px;height:9px;line-height:9px;text-align:center;font-size:7.200px;color:#5e5e5e;transform:rotate(-90deg);">3</div>
<div class="a" style="left:156.5px;top:260.5px;width:2px;height:0.8px;background:#888;"></div>
<div class="a" style="left:137.3px;top:264.5px;width:40px;height:9px;line-height:9px;text-align:center;font-size:7.200px;color:#5e5e5e;transform:rotate(-90deg);">2</div>
<div class="a" style="left:156.5px;top:277.4px;width:2px;height:0.8px;background:#888;"></div>
<div class="a" style="left:137.3px;top:281.4px;width:40px;height:9px;line-height:9px;text-align:center;font-size:7.200px;color:#5e5e5e;transform:rotate(-90deg);">1</div>
<div class="a" style="left:156.5px;top:294.3px;width:2px;height:0.8px;background:#888;"></div>
<div class="a" style="left:137.3px;top:298.3px;width:40px;height:9px;line-height:9px;text-align:center;font-size:7.200px;color:#5e5e5e;transform:rotate(-90deg);">0</div>
<div class="a" style="left:156.5px;top:311.3px;width:2px;height:0.8px;background:#888;"></div>
<div class="a" style="left:137.3px;top:315.2px;width:40px;height:9px;line-height:9px;text-align:center;font-size:7.200px;color:#5e5e5e;transform:rotate(-90deg);">1</div>
<div class="a" style="left:156.5px;top:328.2px;width:2px;height:0.8px;background:#888;"></div>
<div class="a" style="left:137.3px;top:332.1px;width:40px;height:9px;line-height:9px;text-align:center;font-size:7.200px;color:#5e5e5e;transform:rotate(-90deg);">2</div>
<div class="a" style="left:156.5px;top:345.1px;width:2px;height:0.8px;background:#888;"></div>
<div class="a" style="left:137.3px;top:349.1px;width:40px;height:9px;line-height:9px;text-align:center;font-size:7.200px;color:#5e5e5e;transform:rotate(-90deg);">3</div>
<div class="a" style="left:156.5px;top:362.0px;width:2px;height:0.8px;background:#888;"></div>
<div class="a" style="left:137.3px;top:366.0px;width:40px;height:9px;line-height:9px;text-align:center;font-size:7.200px;color:#5e5e5e;transform:rotate(-90deg);">4</div>
<div class="a" style="left:156.5px;top:378.9px;width:2px;height:0.8px;background:#888;"></div>
<div class="a" style="left:137.3px;top:382.9px;width:40px;height:9px;line-height:9px;text-align:center;font-size:7.200px;color:#5e5e5e;transform:rotate(-90deg);">5</div>
<div class="a" style="left:156.5px;top:395.9px;width:2px;height:0.8px;background:#888;"></div>
<div class="a" style="left:137.3px;top:399.8px;width:40px;height:9px;line-height:9px;text-align:center;font-size:7.200px;color:#5e5e5e;transform:rotate(-90deg);">6</div>
<div class="a" style="left:156.5px;top:412.8px;width:2px;height:0.8px;background:#888;"></div>
<div class="a" style="left:137.3px;top:416.7px;width:40px;height:9px;line-height:9px;text-align:center;font-size:7.200px;color:#5e5e5e;transform:rotate(-90deg);">7</div>
<div class="a" style="left:156.5px;top:429.7px;width:2px;height:0.8px;background:#888;"></div>
<div class="a" style="left:137.3px;top:433.7px;width:40px;height:9px;line-height:9px;text-align:center;font-size:7.200px;color:#5e5e5e;transform:rotate(-90deg);">8</div>
<div class="a" style="left:156.5px;top:446.6px;width:2px;height:0.8px;background:#888;"></div>
<div class="a" style="left:137.3px;top:450.6px;width:40px;height:9px;line-height:9px;text-align:center;font-size:7.200px;color:#5e5e5e;transform:rotate(-90deg);">9</div>
<div class="a" style="left:888.5px;top:122px;width:8.5px;height:372.5px;background:#dfdfdf;"></div>
<div class="a" style="left:897px;top:69px;width:1px;height:438px;background:#fafafa;"></div>
<div class="a" style="left:889.5px;top:123px;width:7px;height:10px;background:#f3f3f3;"></div>
<svg style="left:890px;top:126px" width="6" height="4"><path d="M0.500 3.500h5l-2.500-3z" fill="#666"/></svg>
<div class="a" style="left:889.5px;top:299.5px;width:7px;height:9px;background:#fbfbfb;"></div>
<div class="a" style="left:152px;top:472px;width:737px;height:1px;background:#efefef;"></div>
<div class="a" style="top:478.05px;font-size:8.3px;line-height:10.3px;color:#6b6b6b;white-space:nowrap;left:157px;">单击此处添加备注</div>
<div class="a" style="top:496.20px;font-size:7px;line-height:9px;color:#555;white-space:nowrap;left:19px;">幻灯片 第 25 张，共 43 张</div>
<svg style="left:110px;top:496.500px" width="10" height="9" viewBox="0 0 10 9"><rect x="0.500" y="0.500" width="6" height="7" fill="none" stroke="#8a8a8a" stroke-width="0.800"/><path d="M5 5.500l1.500 1.500 3-3.500" fill="none" stroke="#8a8a8a" stroke-width="0.900"/></svg>
<div class="a" style="top:496.20px;font-size:7px;line-height:9px;color:#555;white-space:nowrap;left:129px;">中文(中国)</div>
<svg style="left:621px;top:496.500px" width="10" height="8" viewBox="0 0 10 8"><path d="M1 7h7M2 5h5M4.500 0.500l2.500 3h-5z" fill="none" stroke="#7a7a7a" stroke-width="0.800"/></svg>
<div class="a" style="top:496.20px;font-size:7px;line-height:9px;color:#555;white-space:nowrap;left:631px;">备注</div>
<svg style="left:655.500px;top:496.500px" width="10" height="9" viewBox="0 0 10 9"><path d="M0.500 0.500h8.500v5.500h-5l-2 2v-2h-1.500z" fill="#555"/></svg>
<div class="a" style="top:496.20px;font-size:7px;line-height:9px;color:#555;white-space:nowrap;left:665.5px;">批注</div>
<div class="a" style="left:691.5px;top:494.5px;width:21px;height:12.5px;background:#cfcfcf;"></div>
<svg style="left:691px;top:494px" width="206" height="13" viewBox="0 0 206 13"><g fill="none" stroke="#8a8a8a" stroke-width="0.800">
<rect x="7.500" y="2.500" width="8" height="8"/><rect x="9.500" y="4.500" width="4" height="4"/><path d="M7.500 4.500h2M7.500 8.500h2"/>
<path d="M30.500 2.500h3v2.500h-3zM35.500 2.500h3v2.500h-3zM30.500 6.500h3v2.500h-3zM35.500 6.500h3v2.500h-3zM30.500 10.500h8"/>
<path d="M52.500 3h4v6h-4zM56.500 3h4v6h-4zM56.500 9v1.500"/>
<path d="M74.500 2.500h9M75.500 2.500v5h7v-5M79 7.500v2.500M77 10.500h4"/>
<path d="M95 6.500h3"/><path d="M101 6.500h58" stroke="#c4c4c4"/><path d="M162 6.500h4M164 4.500v4"/>
<rect x="196.500" y="3" width="6.500" height="6.500"/><path d="M198 6.200h3.500M199.800 4.500v3.500" stroke-width="0.600"/></g>
<rect x="122.800" y="2.500" width="2.400" height="8" fill="#666"/><path d="M130 5.500v2" stroke="#aaa" stroke-width="0.700"/></svg>
<div class="a" style="top:496.20px;font-size:7px;line-height:9px;color:#555;white-space:nowrap;left:723px;width:300px;text-align:center;">78%</div>
<div class="a" style="left:313.5px;top:142px;width:427.6px;height:321px;background:#fdfdfd;overflow:hidden;"><div class="a" style="left:20.299999999999997px;top:26.5px;width:74px;height:74px;border-radius:50%;background:rgba(240,150,90,0.35);filter:blur(1.500px);"></div><div class="a" style="left:21.799999999999997px;top:28.0px;width:71px;height:71px;border-radius:50%;border:6.500px solid #ee7a2e;background:radial-gradient(circle at 38% 30%,#ffffff 0%,#f1f1f1 35%,#dcdcdc 75%,#cfcfcf 100%);"></div><div class="a" style="top:49.70px;font-size:12.8px;line-height:14.8px;color:#b8241c;white-space:nowrap;left:-92.7px;width:300px;text-align:center;font-weight:bold;">仿生</div><div class="a" style="top:68.40px;font-size:12.8px;line-height:14.8px;color:#b8241c;white-space:nowrap;left:-92.7px;width:300px;text-align:center;font-weight:bold;">递送</div><div class="a" style="left:20.0px;top:129.0px;width:74px;height:74px;border-radius:50%;background:rgba(60,100,180,0.30);filter:blur(1.500px);"></div><div class="a" style="left:21.5px;top:130.5px;width:71px;height:71px;border-radius:50%;border:6.500px solid #17429a;background:radial-gradient(circle at 38% 30%,#ffffff 0%,#f1f1f1 35%,#dcdcdc 75%,#cfcfcf 100%);"></div><div class="a" style="top:152.20px;font-size:12.8px;line-height:14.8px;color:#b8241c;white-space:nowrap;left:-93px;width:300px;text-align:center;font-weight:bold;">工程</div><div class="a" style="top:170.90px;font-size:12.8px;line-height:14.8px;color:#b8241c;white-space:nowrap;left:-93px;width:300px;text-align:center;font-weight:bold;">思想</div><div class="a" style="left:19.5px;top:226.0px;width:74px;height:74px;border-radius:50%;background:rgba(110,140,80,0.30);filter:blur(1.500px);"></div><div class="a" style="left:21.0px;top:227.5px;width:71px;height:71px;border-radius:50%;border:6.500px solid #587a36;background:radial-gradient(circle at 38% 30%,#ffffff 0%,#f1f1f1 35%,#dcdcdc 75%,#cfcfcf 100%);"></div><div class="a" style="top:249.20px;font-size:12.8px;line-height:14.8px;color:#b8241c;white-space:nowrap;left:-93.5px;width:300px;text-align:center;font-weight:bold;">交叉</div><div class="a" style="top:267.90px;font-size:12.8px;line-height:14.8px;color:#b8241c;white-space:nowrap;left:-93.5px;width:300px;text-align:center;font-weight:bold;">范式</div><div class="a" style="left:102.8px;top:23.4px;width:301.6px;height:78.6px;background:#fce9dd;border:0.800px dashed #ecc9b4;"></div><div class="a" style="top:30.10px;font-size:13px;line-height:15px;color:#1a55c2;white-space:nowrap;left:124.5px;font-weight:bold;">创建新载体，提出新机制，攻克精准递送难题</div><div class="a" style="top:62.40px;font-size:9.8px;line-height:11.8px;color:#474747;white-space:nowrap;left:149.6px;">砷基铁蛋白</div><div class="a" style="top:76.60px;font-size:9.8px;line-height:11.8px;color:#474747;white-space:nowrap;left:149.6px;">白血病靶向</div><div class="a" style="top:62.40px;font-size:9.8px;line-height:11.8px;color:#474747;white-space:nowrap;left:242.3px;">细菌骨架疫苗</div><div class="a" style="top:76.60px;font-size:9.8px;line-height:11.8px;color:#474747;white-space:nowrap;left:242.3px;">形状强化靶向</div><div class="a" style="top:62.40px;font-size:9.8px;line-height:11.8px;color:#474747;white-space:nowrap;left:349px;">嵌合外泌体</div><div class="a" style="top:76.60px;font-size:9.8px;line-height:11.8px;color:#474747;white-space:nowrap;left:349px;">组织双靶向</div><svg style="left:110.100px;top:55.200px" width="36" height="36" viewBox="-18 -18 36 36">
<defs><radialGradient id="g1"><stop offset="0.55" stop-color="#6a84dc"/><stop offset="0.85" stop-color="#4a68cc"/><stop offset="1" stop-color="#3a50b4"/></radialGradient></defs>
<circle r="17.300" fill="#c9c2ec" opacity="0.600"/><circle r="16.300" fill="url(#g1)"/>
<path d="M-15 6A16.300 16.300 0 0 0 14 8.500Q6 14.500 -3 13T-15 6z" fill="#1f3a9c"/>
<path d="M-13.500 -8.500Q-9 -15 -1 -15.500" fill="none" stroke="#27409e" stroke-width="2.500" stroke-linecap="round"/>
<path d="M10 -12Q15 -7 15.500 -1" fill="none" stroke="#3550b0" stroke-width="2" stroke-linecap="round"/>
<circle r="11.200" fill="#9fb3e4" stroke="#2c4096" stroke-width="2.600"/>
<path d="M0 -6.500L6.800 4.500H-6.800z" fill="#3c9c52" stroke="#3c9c52" stroke-width="4" stroke-linejoin="round"/>
<circle cx="-4" cy="1.200" r="0.700" fill="#7dea8a"/><circle cx="4.500" cy="1.500" r="0.700" fill="#7dea8a"/><circle cx="1" cy="0" r="0.500" fill="#a05a4a"/></svg><svg style="left:208px;top:54px" width="36" height="36" viewBox="0 0 36 36">
<defs><linearGradient id="g2" x1="0" y1="1" x2="1" y2="0"><stop offset="0" stop-color="#3f7690"/><stop offset="0.350" stop-color="#274356"/><stop offset="0.700" stop-color="#243a4c"/><stop offset="1" stop-color="#3d667e"/></linearGradient></defs>
<path d="M10.800 29.300Q14 15.500 26.300 7.500" fill="none" stroke="#b9c6cf" stroke-width="12.500" stroke-linecap="round" opacity="0.450"/>
<path d="M10.800 29.300Q14 15.500 26.300 7.500" fill="none" stroke="url(#g2)" stroke-width="9.600" stroke-linecap="round"/>
<path d="M13.500 23Q16.500 15 23 10.500" fill="none" stroke="#1c2f42" stroke-width="3" stroke-linecap="round" opacity="0.600"/></svg><svg style="left:310.600px;top:56.300px" width="36" height="36" viewBox="-18 -18 36 36">
<defs><radialGradient id="g3" cx="0.400" cy="0.350"><stop offset="0" stop-color="#cfe3f8"/><stop offset="0.7" stop-color="#aecbef"/><stop offset="1" stop-color="#9dbbe8"/></radialGradient></defs><path d="M13.0 -1.1L15.9 -1.4" stroke="#3aaa50" stroke-width="1.600" stroke-linecap="round" opacity="0.850"/><path d="M11.8 5.5L14.5 6.8" stroke="#e07a5a" stroke-width="1.600" stroke-linecap="round" opacity="0.850"/><path d="M7.5 10.6L9.2 13.1" stroke="#9a8ad0" stroke-width="1.600" stroke-linecap="round" opacity="0.850"/><path d="M1.1 13.0L1.4 15.9" stroke="#e07a5a" stroke-width="1.600" stroke-linecap="round" opacity="0.850"/><path d="M-5.5 11.8L-6.8 14.5" stroke="#3aaa50" stroke-width="1.600" stroke-linecap="round" opacity="0.850"/><path d="M-10.6 7.5L-13.1 9.2" stroke="#9a8ad0" stroke-width="1.600" stroke-linecap="round" opacity="0.850"/><path d="M-13.0 1.1L-15.9 1.4" stroke="#8a7ac8" stroke-width="1.600" stroke-linecap="round" opacity="0.850"/><path d="M-11.8 -5.5L-14.5 -6.8" stroke="#6a7ac0" stroke-width="1.600" stroke-linecap="round" opacity="0.850"/><path d="M-7.5 -10.6L-9.2 -13.1" stroke="#3aaa50" stroke-width="1.600" stroke-linecap="round" opacity="0.850"/><path d="M-1.1 -13.0L-1.4 -15.9" stroke="#e07a5a" stroke-width="1.600" stroke-linecap="round" opacity="0.850"/><path d="M5.5 -11.8L6.8 -14.5" stroke="#e58a5a" stroke-width="1.600" stroke-linecap="round" opacity="0.850"/><path d="M10.6 -7.5L13.1 -9.2" stroke="#9a8ad0" stroke-width="1.600" stroke-linecap="round" opacity="0.850"/><circle r="12.700" fill="url(#g3)" stroke="#2c4c8c" stroke-width="2"/>
<circle cx="3" cy="-5" r="0.800" fill="#c07ab0"/><circle cx="-4" cy="4" r="0.700" fill="#c07ab0"/><circle cx="5" cy="5" r="0.700" fill="#8a9ad0"/></svg><div class="a" style="left:101.75px;top:126px;width:301.75px;height:78.3px;background:#e7eff9;border:0.800px dashed #8a93a5;"></div><div class="a" style="top:132.90px;font-size:13px;line-height:15px;color:#1c57bd;white-space:nowrap;left:128px;font-weight:bold;">基于天然组分，突破制备瓶颈，提高成药性</div><div class="a" style="left:108.5px;top:160.2px;width:65.3px;height:33px;background:rgba(40,80,160,0.25);border-radius:6px;filter:blur(1px);"></div><div class="a" style="left:109.5px;top:161.2px;width:63.3px;height:30.8px;background:#123f91;border-radius:5.500px;"></div><div class="a" style="top:170.80px;font-size:11.4px;line-height:13.4px;color:#ffffff;white-space:nowrap;left:-8.849999999999994px;width:300px;text-align:center;font-weight:bold;letter-spacing:-0.050px;">材料可批准</div><div class="a" style="left:182.8px;top:160.2px;width:65.3px;height:33px;background:rgba(40,80,160,0.25);border-radius:6px;filter:blur(1px);"></div><div class="a" style="left:183.8px;top:161.2px;width:63.3px;height:30.8px;background:#123f91;border-radius:5.500px;"></div><div class="a" style="top:170.80px;font-size:11.4px;line-height:13.4px;color:#ffffff;white-space:nowrap;left:65.45000000000002px;width:300px;text-align:center;font-weight:bold;letter-spacing:-0.050px;">组分精简化</div><div class="a" style="left:257.1px;top:160.2px;width:65.3px;height:33px;background:rgba(40,80,160,0.25);border-radius:6px;filter:blur(1px);"></div><div class="a" style="left:258.1px;top:161.2px;width:63.3px;height:30.8px;background:#123f91;border-radius:5.500px;"></div><div class="a" style="top:170.80px;font-size:11.4px;line-height:13.4px;color:#ffffff;white-space:nowrap;left:139.75px;width:300px;text-align:center;font-weight:bold;letter-spacing:-0.050px;">制备可放大</div><div class="a" style="left:331.5px;top:160.2px;width:65.3px;height:33px;background:rgba(40,80,160,0.25);border-radius:6px;filter:blur(1px);"></div><div class="a" style="left:332.5px;top:161.2px;width:63.3px;height:30.8px;background:#123f91;border-radius:5.500px;"></div><div class="a" style="top:170.80px;font-size:11.4px;line-height:13.4px;color:#ffffff;white-space:nowrap;left:214.14999999999998px;width:300px;text-align:center;font-weight:bold;letter-spacing:-0.050px;">工艺绿色化</div><div class="a" style="left:101.75px;top:223px;width:301.75px;height:78.6px;background:linear-gradient(90deg,#f5f5e8,#eef4ec 60%,#edf3f0);border:0.800px dashed #a9b09e;"></div><div class="a" style="top:232.40px;font-size:13px;line-height:15px;color:#1c57bd;white-space:nowrap;left:121.25px;font-weight:bold;">问题来源临床</div><div class="a" style="top:232.40px;font-size:13px;line-height:15px;color:#1c57bd;white-space:nowrap;left:215.5px;font-weight:bold;">策略面向临床</div><div class="a" style="top:232.40px;font-size:13px;line-height:15px;color:#1c57bd;white-space:nowrap;left:309.9px;font-weight:bold;">应用回归临床</div><div class="a" style="top:233.60px;font-size:12px;line-height:14px;color:#1c57bd;white-space:nowrap;left:202.6px;font-weight:bold;font-family:'Noto Sans CJK SC',sans-serif;">→</div><div class="a" style="top:233.60px;font-size:12px;line-height:14px;color:#1c57bd;white-space:nowrap;left:294.4px;font-weight:bold;font-family:'Noto Sans CJK SC',sans-serif;">→</div><svg style="left:0;top:0" width="428" height="321" viewBox="0 0 428 321"><path d="M372.3 274V260H264.8V252" fill="none" stroke="#f2cf63" stroke-width="1.4"/><path d="M262.6 252.800L264.8 248.800L267.0 252.800z" fill="#f2cf63"/><path d="M379.8 274V257.3H360.4V252" fill="none" stroke="#f2cf63" stroke-width="1.4"/><path d="M358.2 252.800L360.4 248.800L362.59999999999997 252.800z" fill="#f2cf63"/><path d="M134.9 274V266.4H341.8V252" fill="none" stroke="#b5483f" stroke-width="1.1"/><path d="M339.6 252.800L341.8 248.800L344.0 252.800z" fill="#b5483f"/><path d="M186.5 274V270.5H351.9V252" fill="none" stroke="#5f6a3c" stroke-width="1.1"/><path d="M349.7 252.800L351.9 248.800L354.09999999999997 252.800z" fill="#5f6a3c"/><path d="M128.75 274V258.4H151.25V252" fill="none" stroke="#b5483f" stroke-width="1.1"/><path d="M149.05 252.800L151.25 248.800L153.45 252.800z" fill="#b5483f"/><path d="M171.5 274V257.8H160.6V252" fill="none" stroke="#5d7a4a" stroke-width="1.1"/><path d="M158.4 252.800L160.6 248.800L162.79999999999998 252.800z" fill="#5d7a4a"/><path d="M179 274V258.4H238.2V252" fill="none" stroke="#6a6a4a" stroke-width="1.1"/><path d="M236.0 252.800L238.2 248.800L240.39999999999998 252.800z" fill="#6a6a4a"/><path d="M228.9 274V261.8H247.5V252" fill="none" stroke="#55604a" stroke-width="1.1"/><path d="M245.3 252.800L247.5 248.800L249.7 252.800z" fill="#55604a"/><path d="M279.4 274V263H255.5V252" fill="none" stroke="#35558f" stroke-width="1.1"/><path d="M253.3 252.800L255.5 248.800L257.7 252.800z" fill="#35558f"/><path d="M325.1 274V257.3H272.7V252" fill="none" stroke="#6a5a95" stroke-width="1.1"/><path d="M270.5 252.800L272.7 248.800L274.9 252.800z" fill="#6a5a95"/></svg><div class="a" style="left:111.5px;top:273.5px;width:38.5px;height:23px;border-radius:4.500px;background:radial-gradient(ellipse at center,#fde2e0 45%,#e56f6f 100%);border:1.400px solid #e56f6f;box-shadow:0 0 1.500px #e56f6f;"></div><div class="a" style="top:280.60px;font-size:9.4px;line-height:11.4px;color:#1d2c5c;white-space:nowrap;left:-19.25px;width:300px;text-align:center;font-weight:bold;">医学</div><div class="a" style="left:159.9px;top:273.5px;width:38.5px;height:23px;border-radius:4.500px;background:radial-gradient(ellipse at center,#fbeedb 45%,#dcb67c 100%);border:1.400px solid #dcb67c;box-shadow:0 0 1.500px #dcb67c;"></div><div class="a" style="top:280.60px;font-size:9.4px;line-height:11.4px;color:#1d2c5c;white-space:nowrap;left:29.150000000000006px;width:300px;text-align:center;font-weight:bold;">生命</div><div class="a" style="left:209.5px;top:273.5px;width:38.5px;height:23px;border-radius:4.500px;background:radial-gradient(ellipse at center,#e9eee6 45%,#93a58d 100%);border:1.400px solid #93a58d;box-shadow:0 0 1.500px #93a58d;"></div><div class="a" style="top:280.60px;font-size:9.4px;line-height:11.4px;color:#1d2c5c;white-space:nowrap;left:78.75px;width:300px;text-align:center;font-weight:bold;">化工</div><div class="a" style="left:257.5px;top:273.5px;width:38.5px;height:23px;border-radius:4.500px;background:radial-gradient(ellipse at center,#e3f3fd 45%,#6fc0ee 100%);border:1.400px solid #6fc0ee;box-shadow:0 0 1.500px #6fc0ee;"></div><div class="a" style="top:280.60px;font-size:9.4px;line-height:11.4px;color:#1d2c5c;white-space:nowrap;left:126.75px;width:300px;text-align:center;font-weight:bold;">化学</div><div class="a" style="left:305.9px;top:273.5px;width:38.5px;height:23px;border-radius:4.500px;background:radial-gradient(ellipse at center,#ece5f7 45%,#a48bd0 100%);border:1.400px solid #a48bd0;box-shadow:0 0 1.500px #a48bd0;"></div><div class="a" style="top:280.60px;font-size:9.4px;line-height:11.4px;color:#1d2c5c;white-space:nowrap;left:175.14999999999998px;width:300px;text-align:center;font-weight:bold;">材料</div><div class="a" style="left:354.5px;top:273.5px;width:38.5px;height:23px;border-radius:4.500px;background:radial-gradient(ellipse at center,#fdf6da 45%,#ecd26c 100%);border:1.400px solid #ecd26c;box-shadow:0 0 1.500px #ecd26c;"></div><div class="a" style="top:280.60px;font-size:9.4px;line-height:11.4px;color:#1d2c5c;white-space:nowrap;left:223.75px;width:300px;text-align:center;font-weight:bold;">药学</div><div class="a" style="top:305.50px;font-size:10.8px;line-height:12.8px;color:#777;white-space:nowrap;left:268.3px;width:300px;text-align:center;">25</div></div>
<svg style="left:551px;top:153.500px" width="7" height="10" viewBox="0 0 7 10"><path d="M0.500 0.500v7.500l1.900-1.700 1.300 2.900 1.200-0.500-1.300-2.900h2.600z" fill="#fff" stroke="#333" stroke-width="0.700"/></svg>
<div class="a" style="left:35.6px;top:122px;width:92px;height:20px;background:#fcfcfc;"></div>
<svg style="left:35.600px;top:122px" width="92" height="20" viewBox="0 0 92 20">
<rect x="6" y="1" width="10" height="12" fill="#f1ece8"/><path d="M8 12v-5q3-4 6 0v5z" fill="#3b3b3b"/><circle cx="11" cy="4.500" r="2" fill="#8a6a5a"/><path d="M7 14.500h9" stroke="#c9a5a0" stroke-width="1"/>
<circle cx="25" cy="7" r="6" fill="#e06a2a"/><circle cx="25" cy="7" r="3.800" fill="#f3a25c"/><path d="M20 14.500h10" stroke="#d9b0a0" stroke-width="1"/>
<rect x="35.500" y="1" width="16" height="13" fill="#3a3f37"/><rect x="52.500" y="1" width="16" height="13" fill="#414640"/><rect x="69.500" y="1" width="16" height="13" fill="#3b4038"/>
<path d="M40 11q2-5 4-3t5 1M57 11q3-4 5-2t4 0M74 11q2-4 5-3t4 1" stroke="#7d9a4a" stroke-width="1.600" fill="none"/>
<path d="M30 17h34" stroke="#d8d8d8" stroke-width="0.800"/></svg>
<div class="a" style="top:151.05px;font-size:8.5px;line-height:10.5px;color:#6a6a6a;white-space:nowrap;left:17px;">23</div>
<div class="a" style="left:35.6px;top:153.5px;width:92px;height:70px;background:#fcfcfc;"></div>
<svg style="left:35.600px;top:153.500px" width="92" height="70" viewBox="0 0 92 70"><rect x="3.500" y="10.500" width="24" height="36" fill="#f4f4f4" stroke="#c9c9c9" stroke-width="0.600"/><rect x="29" y="10.500" width="21" height="36" fill="#f4f4f4" stroke="#c9c9c9" stroke-width="0.600"/><rect x="52" y="10.500" width="35" height="57" fill="#f6f6f6" stroke="#c9c9c9" stroke-width="0.600"/><rect x="3.500" y="48.500" width="46.500" height="19" fill="#f1f3f3" stroke="#c9c9c9" stroke-width="0.600"/><path d="M5.500 15h20M31 15h17" stroke="#cfcfcf" stroke-width="0.700"/><path d="M5.500 17h20M31 17h17" stroke="#cfcfcf" stroke-width="0.700"/><path d="M5.500 19h20M31 19h17" stroke="#cfcfcf" stroke-width="0.700"/><path d="M5.500 21h20M31 21h17" stroke="#cfcfcf" stroke-width="0.700"/><path d="M5.500 23h20M31 23h17" stroke="#cfcfcf" stroke-width="0.700"/><path d="M5.500 25h20M31 25h17" stroke="#cfcfcf" stroke-width="0.700"/><path d="M5.500 27h20M31 27h17" stroke="#cfcfcf" stroke-width="0.700"/><path d="M5.500 29h20M31 29h17" stroke="#cfcfcf" stroke-width="0.700"/><path d="M5.500 31h20M31 31h17" stroke="#cfcfcf" stroke-width="0.700"/><path d="M5.500 33h20M31 33h17" stroke="#cfcfcf" stroke-width="0.700"/><path d="M54 20h27" stroke="#d1d1d1" stroke-width="0.700"/><path d="M54 22h31" stroke="#d1d1d1" stroke-width="0.700"/><path d="M54 24h27" stroke="#d1d1d1" stroke-width="0.700"/><path d="M54 26h31" stroke="#d1d1d1" stroke-width="0.700"/><path d="M54 28h27" stroke="#d1d1d1" stroke-width="0.700"/><path d="M54 30h31" stroke="#d1d1d1" stroke-width="0.700"/><path d="M54 32h27" stroke="#d1d1d1" stroke-width="0.700"/><path d="M54 34h31" stroke="#d1d1d1" stroke-width="0.700"/><path d="M54 36h27" stroke="#d1d1d1" stroke-width="0.700"/><path d="M54 38h31" stroke="#d1d1d1" stroke-width="0.700"/><path d="M54 40h27" stroke="#d1d1d1" stroke-width="0.700"/><path d="M54 42h31" stroke="#d1d1d1" stroke-width="0.700"/><path d="M54 44h27" stroke="#d1d1d1" stroke-width="0.700"/><path d="M54 46h31" stroke="#d1d1d1" stroke-width="0.700"/><path d="M54 48h27" stroke="#d1d1d1" stroke-width="0.700"/><path d="M54 50h31" stroke="#d1d1d1" stroke-width="0.700"/><path d="M54 52h27" stroke="#d1d1d1" stroke-width="0.700"/><path d="M54 54h31" stroke="#d1d1d1" stroke-width="0.700"/><path d="M54 56h27" stroke="#d1d1d1" stroke-width="0.700"/><path d="M54 13.500h31M54 15.500h31M54 17.500h28" stroke="#4a4f6a" stroke-width="0.800"/><path d="M56 22.500h16" stroke="#5a5a5a" stroke-width="0.600"/><path d="M5 35.5h21M31 35.5h18" stroke="#e0807a" stroke-width="1.400"/><path d="M5 38.5h21M31 38.5h18" stroke="#e0807a" stroke-width="1.400"/><path d="M5 41h21M31 41h18" stroke="#e0807a" stroke-width="1.400"/><path d="M5 43.5h21M31 43.5h18" stroke="#e0807a" stroke-width="1.400"/><path d="M55 58.500h30M55 61.500h30M55 64.500h30" stroke="#e0807a" stroke-width="1.500"/><path d="M30 65h15" stroke="#e0807a" stroke-width="1.500"/><path d="M6 52h40M8 55h36M8 57.500h30M6 61h38" stroke="#cdd3d3" stroke-width="0.800"/></svg>
<div class="a" style="top:156.20px;font-size:5.2px;line-height:7.2px;color:#2a3fa5;white-space:nowrap;left:41.5px;font-weight:bold;">引用和评价</div>
<div class="a" style="top:232.55px;font-size:8.5px;line-height:10.5px;color:#6a6a6a;white-space:nowrap;left:17px;">24</div>
<div class="a" style="left:35.8px;top:235.7px;width:92px;height:68.5px;background:#fcfcfc;"></div>
<div class="a" style="top:237.80px;font-size:5px;line-height:7px;color:#2a3fa5;white-space:nowrap;left:41.5px;font-weight:bold;">成果转化研究</div>
<svg style="left:35.800px;top:235.700px" width="92" height="69" viewBox="0 0 92 69"><path d="M6 9h22" stroke="#8a9ad0" stroke-width="0.500"/><rect x="4.500" y="11.500" width="75" height="25" fill="#e9eef6"/><rect x="4.500" y="11.500" width="75" height="3.200" fill="#1c3478"/><path d="M23 17.5h36" stroke="#2a4076" stroke-width="1.500"/><path d="M10 17.5h12M60 17.5h12" stroke="#b9c2d6" stroke-width="0.600"/><path d="M23 20.5h28" stroke="#2a4076" stroke-width="1.500"/><path d="M10 20.5h12M52 20.5h20" stroke="#b9c2d6" stroke-width="0.600"/><path d="M23 25h35" stroke="#2a4076" stroke-width="1.500"/><path d="M10 25h12M59 25h13" stroke="#b9c2d6" stroke-width="0.600"/><path d="M23 28h40" stroke="#2a4076" stroke-width="1.500"/><path d="M10 28h12M64 28h8" stroke="#b9c2d6" stroke-width="0.600"/><path d="M23 33.5h40" stroke="#2a4076" stroke-width="1.500"/><path d="M10 33.5h12M64 33.5h8" stroke="#b9c2d6" stroke-width="0.600"/><path d="M4.500 30.500h75M4.500 22.800h75" stroke="#fff" stroke-width="0.800"/><rect x="5.500" y="15.7" width="3" height="2.600" fill="#6a7a9a"/><rect x="81.500" y="15.7" width="3.500" height="2.800" fill="#5a7a8a" opacity="0.700"/><rect x="5.500" y="19.7" width="3" height="2.600" fill="#6a7a9a"/><rect x="81.500" y="19.7" width="3.500" height="2.800" fill="#5a7a8a" opacity="0.700"/><rect x="5.500" y="23.7" width="3" height="2.600" fill="#6a7a9a"/><rect x="81.500" y="23.7" width="3.500" height="2.800" fill="#5a7a8a" opacity="0.700"/><rect x="5.500" y="27.7" width="3" height="2.600" fill="#6a7a9a"/><rect x="81.500" y="27.7" width="3.500" height="2.800" fill="#5a7a8a" opacity="0.700"/><rect x="5.500" y="32.2" width="3" height="2.600" fill="#6a7a9a"/><rect x="81.500" y="32.2" width="3.500" height="2.800" fill="#5a7a8a" opacity="0.700"/><rect x="4.700" y="39.500" width="19.500" height="25.500" fill="#6d7276"/><rect x="6" y="41" width="8" height="11" fill="#3f4448"/><rect x="15" y="46" width="8" height="18" fill="#b9bcc0"/><rect x="5.500" y="54" width="9" height="10" fill="#4a4f54"/><rect x="25.500" y="39.500" width="20" height="25.500" fill="#f3efea" stroke="#cfc9c0" stroke-width="0.500"/><rect x="26" y="40" width="2" height="12" fill="#a5352a"/><path d="M35.500 39.500v25.500M25.500 52.500h20" stroke="#c9c2b8" stroke-width="0.600"/><path d="M37 50q4-1 7-5" stroke="#e7b48a" stroke-width="1" fill="none"/><rect x="47" y="39.500" width="19" height="25.500" fill="#f4f4f2" stroke="#cfcfcf" stroke-width="0.500"/><rect x="67.500" y="39.500" width="18" height="25.500" fill="#f6f6f4" stroke="#cfcfcf" stroke-width="0.500"/><path d="M49 43h15M69.500 43h14" stroke="#dedede" stroke-width="0.600"/><path d="M49 46h15M69.500 46h14" stroke="#dedede" stroke-width="0.600"/><path d="M49 49h15M69.500 49h14" stroke="#dedede" stroke-width="0.600"/><path d="M49 52h15M69.500 52h14" stroke="#dedede" stroke-width="0.600"/><path d="M49 55h15M69.500 55h14" stroke="#dedede" stroke-width="0.600"/><path d="M49 58h15M69.500 58h14" stroke="#dedede" stroke-width="0.600"/><path d="M49 61h15M69.500 61h14" stroke="#dedede" stroke-width="0.600"/></svg>
<div class="a" style="top:313.55px;font-size:8.5px;line-height:10.5px;color:#c9553a;white-space:nowrap;left:17px;">25</div>
<div class="a" style="left:32.8px;top:313.5px;width:97.5px;height:75.5px;background:rgba(244,196,178,0.55);filter:blur(0.800px);"></div>
<div class="a" style="left:34.2px;top:315px;width:94.6px;height:72.3px;background:#fdfdfd;border:1.400px solid #cf583c;"></div>
<div class="a" style="left:35.600px;top:316.400px;width:428px;height:321px;transform-origin:0 0;transform:scale(0.21449);overflow:hidden;"><div class="a" style="left:20.299999999999997px;top:26.5px;width:74px;height:74px;border-radius:50%;background:rgba(240,150,90,0.35);filter:blur(1.500px);"></div><div class="a" style="left:21.799999999999997px;top:28.0px;width:71px;height:71px;border-radius:50%;border:6.500px solid #ee7a2e;background:radial-gradient(circle at 38% 30%,#ffffff 0%,#f1f1f1 35%,#dcdcdc 75%,#cfcfcf 100%);"></div><div class="a" style="top:49.70px;font-size:12.8px;line-height:14.8px;color:#b8241c;white-space:nowrap;left:-92.7px;width:300px;text-align:center;font-weight:bold;">仿生</div><div class="a" style="top:68.40px;font-size:12.8px;line-height:14.8px;color:#b8241c;white-space:nowrap;left:-92.7px;width:300px;text-align:center;font-weight:bold;">递送</div><div class="a" style="left:20.0px;top:129.0px;width:74px;height:74px;border-radius:50%;background:rgba(60,100,180,0.30);filter:blur(1.500px);"></div><div class="a" style="left:21.5px;top:130.5px;width:71px;height:71px;border-radius:50%;border:6.500px solid #17429a;background:radial-gradient(circle at 38% 30%,#ffffff 0%,#f1f1f1 35%,#dcdcdc 75%,#cfcfcf 100%);"></div><div class="a" style="top:152.20px;font-size:12.8px;line-height:14.8px;color:#b8241c;white-space:nowrap;left:-93px;width:300px;text-align:center;font-weight:bold;">工程</div><div class="a" style="top:170.90px;font-size:12.8px;line-height:14.8px;color:#b8241c;white-space:nowrap;left:-93px;width:300px;text-align:center;font-weight:bold;">思想</div><div class="a" style="left:19.5px;top:226.0px;width:74px;height:74px;border-radius:50%;background:rgba(110,140,80,0.30);filter:blur(1.500px);"></div><div class="a" style="left:21.0px;top:227.5px;width:71px;height:71px;border-radius:50%;border:6.500px solid #587a36;background:radial-gradient(circle at 38% 30%,#ffffff 0%,#f1f1f1 35%,#dcdcdc 75%,#cfcfcf 100%);"></div><div class="a" style="top:249.20px;font-size:12.8px;line-height:14.8px;color:#b8241c;white-space:nowrap;left:-93.5px;width:300px;text-align:center;font-weight:bold;">交叉</div><div class="a" style="top:267.90px;font-size:12.8px;line-height:14.8px;color:#b8241c;white-space:nowrap;left:-93.5px;width:300px;text-align:center;font-weight:bold;">范式</div><div class="a" style="left:102.8px;top:23.4px;width:301.6px;height:78.6px;background:#fce9dd;border:0.800px dashed #ecc9b4;"></div><div class="a" style="top:30.10px;font-size:13px;line-height:15px;color:#1a55c2;white-space:nowrap;left:124.5px;font-weight:bold;">创建新载体，提出新机制，攻克精准递送难题</div><div class="a" style="top:62.40px;font-size:9.8px;line-height:11.8px;color:#474747;white-space:nowrap;left:149.6px;">砷基铁蛋白</div><div class="a" style="top:76.60px;font-size:9.8px;line-height:11.8px;color:#474747;white-space:nowrap;left:149.6px;">白血病靶向</div><div class="a" style="top:62.40px;font-size:9.8px;line-height:11.8px;color:#474747;white-space:nowrap;left:242.3px;">细菌骨架疫苗</div><div class="a" style="top:76.60px;font-size:9.8px;line-height:11.8px;color:#474747;white-space:nowrap;left:242.3px;">形状强化靶向</div><div class="a" style="top:62.40px;font-size:9.8px;line-height:11.8px;color:#474747;white-space:nowrap;left:349px;">嵌合外泌体</div><div class="a" style="top:76.60px;font-size:9.8px;line-height:11.8px;color:#474747;white-space:nowrap;left:349px;">组织双靶向</div><svg style="left:110.100px;top:55.200px" width="36" height="36" viewBox="-18 -18 36 36">
<defs><radialGradient id="tg1"><stop offset="0.55" stop-color="#6a84dc"/><stop offset="0.85" stop-color="#4a68cc"/><stop offset="1" stop-color="#3a50b4"/></radialGradient></defs>
<circle r="17.300" fill="#c9c2ec" opacity="0.600"/><circle r="16.300" fill="url(#tg1)"/>
<path d="M-15 6A16.300 16.300 0 0 0 14 8.500Q6 14.500 -3 13T-15 6z" fill="#1f3a9c"/>
<path d="M-13.500 -8.500Q-9 -15 -1 -15.500" fill="none" stroke="#27409e" stroke-width="2.500" stroke-linecap="round"/>
<path d="M10 -12Q15 -7 15.500 -1" fill="none" stroke="#3550b0" stroke-width="2" stroke-linecap="round"/>
<circle r="11.200" fill="#9fb3e4" stroke="#2c4096" stroke-width="2.600"/>
<path d="M0 -6.500L6.800 4.500H-6.800z" fill="#3c9c52" stroke="#3c9c52" stroke-width="4" stroke-linejoin="round"/>
<circle cx="-4" cy="1.200" r="0.700" fill="#7dea8a"/><circle cx="4.500" cy="1.500" r="0.700" fill="#7dea8a"/><circle cx="1" cy="0" r="0.500" fill="#a05a4a"/></svg><svg style="left:208px;top:54px" width="36" height="36" viewBox="0 0 36 36">
<defs><linearGradient id="tg2" x1="0" y1="1" x2="1" y2="0"><stop offset="0" stop-color="#3f7690"/><stop offset="0.350" stop-color="#274356"/><stop offset="0.700" stop-color="#243a4c"/><stop offset="1" stop-color="#3d667e"/></linearGradient></defs>
<path d="M10.800 29.300Q14 15.500 26.300 7.500" fill="none" stroke="#b9c6cf" stroke-width="12.500" stroke-linecap="round" opacity="0.450"/>
<path d="M10.800 29.300Q14 15.500 26.300 7.500" fill="none" stroke="url(#tg2)" stroke-width="9.600" stroke-linecap="round"/>
<path d="M13.500 23Q16.500 15 23 10.500" fill="none" stroke="#1c2f42" stroke-width="3" stroke-linecap="round" opacity="0.600"/></svg><svg style="left:310.600px;top:56.300px" width="36" height="36" viewBox="-18 -18 36 36">
<defs><radialGradient id="tg3" cx="0.400" cy="0.350"><stop offset="0" stop-color="#cfe3f8"/><stop offset="0.7" stop-color="#aecbef"/><stop offset="1" stop-color="#9dbbe8"/></radialGradient></defs><path d="M13.0 -1.1L15.9 -1.4" stroke="#3aaa50" stroke-width="1.600" stroke-linecap="round" opacity="0.850"/><path d="M11.8 5.5L14.5 6.8" stroke="#e07a5a" stroke-width="1.600" stroke-linecap="round" opacity="0.850"/><path d="M7.5 10.6L9.2 13.1" stroke="#9a8ad0" stroke-width="1.600" stroke-linecap="round" opacity="0.850"/><path d="M1.1 13.0L1.4 15.9" stroke="#e07a5a" stroke-width="1.600" stroke-linecap="round" opacity="0.850"/><path d="M-5.5 11.8L-6.8 14.5" stroke="#3aaa50" stroke-width="1.600" stroke-linecap="round" opacity="0.850"/><path d="M-10.6 7.5L-13.1 9.2" stroke="#9a8ad0" stroke-width="1.600" stroke-linecap="round" opacity="0.850"/><path d="M-13.0 1.1L-15.9 1.4" stroke="#8a7ac8" stroke-width="1.600" stroke-linecap="round" opacity="0.850"/><path d="M-11.8 -5.5L-14.5 -6.8" stroke="#6a7ac0" stroke-width="1.600" stroke-linecap="round" opacity="0.850"/><path d="M-7.5 -10.6L-9.2 -13.1" stroke="#3aaa50" stroke-width="1.600" stroke-linecap="round" opacity="0.850"/><path d="M-1.1 -13.0L-1.4 -15.9" stroke="#e07a5a" stroke-width="1.600" stroke-linecap="round" opacity="0.850"/><path d="M5.5 -11.8L6.8 -14.5" stroke="#e58a5a" stroke-width="1.600" stroke-linecap="round" opacity="0.850"/><path d="M10.6 -7.5L13.1 -9.2" stroke="#9a8ad0" stroke-width="1.600" stroke-linecap="round" opacity="0.850"/><circle r="12.700" fill="url(#tg3)" stroke="#2c4c8c" stroke-width="2"/>
<circle cx="3" cy="-5" r="0.800" fill="#c07ab0"/><circle cx="-4" cy="4" r="0.700" fill="#c07ab0"/><circle cx="5" cy="5" r="0.700" fill="#8a9ad0"/></svg><div class="a" style="left:101.75px;top:126px;width:301.75px;height:78.3px;background:#e7eff9;border:0.800px dashed #8a93a5;"></div><div class="a" style="top:132.90px;font-size:13px;line-height:15px;color:#1c57bd;white-space:nowrap;left:128px;font-weight:bold;">基于天然组分，突破制备瓶颈，提高成药性</div><div class="a" style="left:108.5px;top:160.2px;width:65.3px;height:33px;background:rgba(40,80,160,0.25);border-radius:6px;filter:blur(1px);"></div><div class="a" style="left:109.5px;top:161.2px;width:63.3px;height:30.8px;background:#123f91;border-radius:5.500px;"></div><div class="a" style="top:170.80px;font-size:11.4px;line-height:13.4px;color:#ffffff;white-space:nowrap;left:-8.849999999999994px;width:300px;text-align:center;font-weight:bold;letter-spacing:-0.050px;">材料可批准</div><div class="a" style="left:182.8px;top:160.2px;width:65.3px;height:33px;background:rgba(40,80,160,0.25);border-radius:6px;filter:blur(1px);"></div><div class="a" style="left:183.8px;top:161.2px;width:63.3px;height:30.8px;background:#123f91;border-radius:5.500px;"></div><div class="a" style="top:170.80px;font-size:11.4px;line-height:13.4px;color:#ffffff;white-space:nowrap;left:65.45000000000002px;width:300px;text-align:center;font-weight:bold;letter-spacing:-0.050px;">组分精简化</div><div class="a" style="left:257.1px;top:160.2px;width:65.3px;height:33px;background:rgba(40,80,160,0.25);border-radius:6px;filter:blur(1px);"></div><div class="a" style="left:258.1px;top:161.2px;width:63.3px;height:30.8px;background:#123f91;border-radius:5.500px;"></div><div class="a" style="top:170.80px;font-size:11.4px;line-height:13.4px;color:#ffffff;white-space:nowrap;left:139.75px;width:300px;text-align:center;font-weight:bold;letter-spacing:-0.050px;">制备可放大</div><div class="a" style="left:331.5px;top:160.2px;width:65.3px;height:33px;background:rgba(40,80,160,0.25);border-radius:6px;filter:blur(1px);"></div><div class="a" style="left:332.5px;top:161.2px;width:63.3px;height:30.8px;background:#123f91;border-radius:5.500px;"></div><div class="a" style="top:170.80px;font-size:11.4px;line-height:13.4px;color:#ffffff;white-space:nowrap;left:214.14999999999998px;width:300px;text-align:center;font-weight:bold;letter-spacing:-0.050px;">工艺绿色化</div><div class="a" style="left:101.75px;top:223px;width:301.75px;height:78.6px;background:linear-gradient(90deg,#f5f5e8,#eef4ec 60%,#edf3f0);border:0.800px dashed #a9b09e;"></div><div class="a" style="top:232.40px;font-size:13px;line-height:15px;color:#1c57bd;white-space:nowrap;left:121.25px;font-weight:bold;">问题来源临床</div><div class="a" style="top:232.40px;font-size:13px;line-height:15px;color:#1c57bd;white-space:nowrap;left:215.5px;font-weight:bold;">策略面向临床</div><div class="a" style="top:232.40px;font-size:13px;line-height:15px;color:#1c57bd;white-space:nowrap;left:309.9px;font-weight:bold;">应用回归临床</div><div class="a" style="top:233.60px;font-size:12px;line-height:14px;color:#1c57bd;white-space:nowrap;left:202.6px;font-weight:bold;font-family:'Noto Sans CJK SC',sans-serif;">→</div><div class="a" style="top:233.60px;font-size:12px;line-height:14px;color:#1c57bd;white-space:nowrap;left:294.4px;font-weight:bold;font-family:'Noto Sans CJK SC',sans-serif;">→</div><svg style="left:0;top:0" width="428" height="321" viewBox="0 0 428 321"><path d="M372.3 274V260H264.8V252" fill="none" stroke="#f2cf63" stroke-width="1.4"/><path d="M262.6 252.800L264.8 248.800L267.0 252.800z" fill="#f2cf63"/><path d="M379.8 274V257.3H360.4V252" fill="none" stroke="#f2cf63" stroke-width="1.4"/><path d="M358.2 252.800L360.4 248.800L362.59999999999997 252.800z" fill="#f2cf63"/><path d="M134.9 274V266.4H341.8V252" fill="none" stroke="#b5483f" stroke-width="1.1"/><path d="M339.6 252.800L341.8 248.800L344.0 252.800z" fill="#b5483f"/><path d="M186.5 274V270.5H351.9V252" fill="none" stroke="#5f6a3c" stroke-width="1.1"/><path d="M349.7 252.800L351.9 248.800L354.09999999999997 252.800z" fill="#5f6a3c"/><path d="M128.75 274V258.4H151.25V252" fill="none" stroke="#b5483f" stroke-width="1.1"/><path d="M149.05 252.800L151.25 248.800L153.45 252.800z" fill="#b5483f"/><path d="M171.5 274V257.8H160.6V252" fill="none" stroke="#5d7a4a" stroke-width="1.1"/><path d="M158.4 252.800L160.6 248.800L162.79999999999998 252.800z" fill="#5d7a4a"/><path d="M179 274V258.4H238.2V252" fill="none" stroke="#6a6a4a" stroke-width="1.1"/><path d="M236.0 252.800L238.2 248.800L240.39999999999998 252.800z" fill="#6a6a4a"/><path d="M228.9 274V261.8H247.5V252" fill="none" stroke="#55604a" stroke-width="1.1"/><path d="M245.3 252.800L247.5 248.800L249.7 252.800z" fill="#55604a"/><path d="M279.4 274V263H255.5V252" fill="none" stroke="#35558f" stroke-width="1.1"/><path d="M253.3 252.800L255.5 248.800L257.7 252.800z" fill="#35558f"/><path d="M325.1 274V257.3H272.7V252" fill="none" stroke="#6a5a95" stroke-width="1.1"/><path d="M270.5 252.800L272.7 248.800L274.9 252.800z" fill="#6a5a95"/></svg><div class="a" style="left:111.5px;top:273.5px;width:38.5px;height:23px;border-radius:4.500px;background:radial-gradient(ellipse at center,#fde2e0 45%,#e56f6f 100%);border:1.400px solid #e56f6f;box-shadow:0 0 1.500px #e56f6f;"></div><div class="a" style="top:280.60px;font-size:9.4px;line-height:11.4px;color:#1d2c5c;white-space:nowrap;left:-19.25px;width:300px;text-align:center;font-weight:bold;">医学</div><div class="a" style="left:159.9px;top:273.5px;width:38.5px;height:23px;border-radius:4.500px;background:radial-gradient(ellipse at center,#fbeedb 45%,#dcb67c 100%);border:1.400px solid #dcb67c;box-shadow:0 0 1.500px #dcb67c;"></div><div class="a" style="top:280.60px;font-size:9.4px;line-height:11.4px;color:#1d2c5c;white-space:nowrap;left:29.150000000000006px;width:300px;text-align:center;font-weight:bold;">生命</div><div class="a" style="left:209.5px;top:273.5px;width:38.5px;height:23px;border-radius:4.500px;background:radial-gradient(ellipse at center,#e9eee6 45%,#93a58d 100%);border:1.400px solid #93a58d;box-shadow:0 0 1.500px #93a58d;"></div><div class="a" style="top:280.60px;font-size:9.4px;line-height:11.4px;color:#1d2c5c;white-space:nowrap;left:78.75px;width:300px;text-align:center;font-weight:bold;">化工</div><div class="a" style="left:257.5px;top:273.5px;width:38.5px;height:23px;border-radius:4.500px;background:radial-gradient(ellipse at center,#e3f3fd 45%,#6fc0ee 100%);border:1.400px solid #6fc0ee;box-shadow:0 0 1.500px #6fc0ee;"></div><div class="a" style="top:280.60px;font-size:9.4px;line-height:11.4px;color:#1d2c5c;white-space:nowrap;left:126.75px;width:300px;text-align:center;font-weight:bold;">化学</div><div class="a" style="left:305.9px;top:273.5px;width:38.5px;height:23px;border-radius:4.500px;background:radial-gradient(ellipse at center,#ece5f7 45%,#a48bd0 100%);border:1.400px solid #a48bd0;box-shadow:0 0 1.500px #a48bd0;"></div><div class="a" style="top:280.60px;font-size:9.4px;line-height:11.4px;color:#1d2c5c;white-space:nowrap;left:175.14999999999998px;width:300px;text-align:center;font-weight:bold;">材料</div><div class="a" style="left:354.5px;top:273.5px;width:38.5px;height:23px;border-radius:4.500px;background:radial-gradient(ellipse at center,#fdf6da 45%,#ecd26c 100%);border:1.400px solid #ecd26c;box-shadow:0 0 1.500px #ecd26c;"></div><div class="a" style="top:280.60px;font-size:9.4px;line-height:11.4px;color:#1d2c5c;white-space:nowrap;left:223.75px;width:300px;text-align:center;font-weight:bold;">药学</div><div class="a" style="top:305.50px;font-size:10.8px;line-height:12.8px;color:#777;white-space:nowrap;left:268.3px;width:300px;text-align:center;">25</div></div>
<div class="a" style="top:394.95px;font-size:8.5px;line-height:10.5px;color:#6a6a6a;white-space:nowrap;left:17px;">26</div>
<div class="a" style="left:35.9px;top:397.8px;width:92px;height:69px;background:#fcfcfc;"></div>
<div class="a" style="top:400.40px;font-size:4.2px;line-height:6.2px;color:#333;white-space:nowrap;left:-69px;width:300px;text-align:center;font-weight:bold;">我的科研成长轨迹</div>
<svg style="left:35.900px;top:397.800px" width="92" height="69" viewBox="0 0 92 69"><path d="M12.500 10v53.500M12.500 63.500h76" stroke="#9db7dc" stroke-width="0.800" fill="none"/><path d="M8 16h3" stroke="#7f9fd0" stroke-width="0.900"/><path d="M8 26h3" stroke="#7f9fd0" stroke-width="0.900"/><path d="M8 37h3" stroke="#7f9fd0" stroke-width="0.900"/><path d="M8 49h3" stroke="#7f9fd0" stroke-width="0.900"/><path d="M8 58h3" stroke="#7f9fd0" stroke-width="0.900"/><path d="M14 68h6M27 68h7M56 68h14M76 68h8" stroke="#c9d3e6" stroke-width="0.700" transform="translate(0,-2)"/><path d="M14 59.500h16.500v-10.500h25v-12h10.500v-11.500h10v-10.500h10" fill="none" stroke="#bfcfc0" stroke-width="0.600"/><rect x="19.5" y="48.5" width="10.5" height="10.5" fill="#c9dcee"/><path d="M20.5 59.0v-3.1q4.2 -3.1 8.5 0v3.1z" fill="#2f3238"/><circle cx="24.75" cy="52.9" r="2.4" fill="#c79a80"/><path d="M22.1 52.0q2.6 -3.1 5.2 0z" fill="#2a2522"/><rect x="33.5" y="38" width="8" height="10.5" fill="#e6e6e6"/><path d="M34.5 48.5v-3.1q3.0 -3.1 6 0v3.1z" fill="#2f3238"/><circle cx="37.5" cy="42.4" r="1.8" fill="#c79a80"/><path d="M35.5 41.5q2.0 -3.1 4.0 0z" fill="#2a2522"/><rect x="45" y="38" width="8.5" height="10.5" fill="#ead9c5"/><path d="M46 48.5v-3.1q3.2 -3.1 6.5 0v3.1z" fill="#2f3238"/><circle cx="49.25" cy="42.4" r="2.0" fill="#c79a80"/><path d="M47.1 41.5q2.1 -3.1 4.2 0z" fill="#2a2522"/><rect x="53.5" y="25.5" width="8.5" height="11" fill="#dfe8e0"/><path d="M54.5 36.5v-3.3q3.2 -3.3 6.5 0v3.3z" fill="#2f3238"/><circle cx="57.75" cy="30.1" r="2.0" fill="#c79a80"/><path d="M55.6 29.1q2.1 -3.3 4.2 0z" fill="#2a2522"/><rect x="64.5" y="14.5" width="9" height="11.5" fill="#c9dcf2"/><path d="M65.5 26.0v-3.4q3.5 -3.4 7 0v3.4z" fill="#2f3238"/><circle cx="69.0" cy="19.3" r="2.1" fill="#c79a80"/><path d="M66.8 18.3q2.2 -3.4 4.5 0z" fill="#2a2522"/><rect x="75.5" y="5.5" width="8" height="10.5" fill="#eef1f4"/><path d="M76.5 16.0v-3.1q3.0 -3.1 6 0v3.1z" fill="#2f3238"/><circle cx="79.5" cy="9.9" r="1.8" fill="#c79a80"/><path d="M77.5 9.0q2.0 -3.1 4.0 0z" fill="#2a2522"/><path d="M21 21l4-2 2 1.500 3-2.500 2 2.500 4-2 1 2.500 5-1-2 3.500 3 2-4 1.500 1 2.500-5-1-2 2.500-3-2-4 2-1-3-5 0.500 2.500-3z" fill="#fbe3c8"/><path d="M24 22.500h15M25 25.500h13M27 20l8 0" stroke="#e8743a" stroke-width="0.900"/><path d="M73 43q4-5 8 0l2 6q2 2 1 7l-3 3h-7l-2-5z" fill="#e8c040"/><circle cx="80" cy="44" r="3" fill="#e9c7a0"/><path d="M69 57h5v6h-5z" fill="#c8302a"/><path d="M76 55q4 4 8 0v6h-8z" fill="#b5412a"/><path d="M66 40q3-4 7-2l-1 3q-3-1-5 1z" fill="#d98a2a"/><path d="M67 36h8" stroke="#b5762a" stroke-width="1.500"/></svg>
<div class="a" style="top:475.95px;font-size:8.5px;line-height:10.5px;color:#6a6a6a;white-space:nowrap;left:17px;">27</div>
<div class="a" style="left:35.9px;top:479.5px;width:92px;height:14.5px;background:#fcfcfc;"></div>
<div class="a" style="top:481.80px;font-size:4px;line-height:6px;color:#223a7a;white-space:nowrap;left:-67px;width:300px;text-align:center;font-weight:bold;">登高望远, 砥砺奋进不懈怠</div>
<div class="a" style="left:83px;top:490.5px;width:15px;height:2.5px;background:#1d1d1d;"></div>
<div class="a" style="left:70px;top:491px;width:6px;height:2px;background:#555;"></div>
<div class="a" style="left:58.5px;top:488.5px;width:0.6px;height:5.5px;background:#444;"></div>
<svg style="left:902.300px;top:17.700px" width="111.600" height="63" viewBox="0 0 111.600 63"><defs><linearGradient id="cw" x1="0" x2="1"><stop offset="0" stop-color="#d6d7db"/><stop offset="0.450" stop-color="#dfe0e3"/><stop offset="1" stop-color="#e9e8e6"/></linearGradient><clipPath id="cc"><rect width="111.600" height="63"/></clipPath><filter id="cb" x="-10%" y="-10%" width="120%" height="120%"><feGaussianBlur stdDeviation="0.700"/></filter></defs><g clip-path="url(#cc)"><rect x="-5" y="-5" width="121.600" height="73" fill="url(#cw)"/><g filter="url(#cb)"><rect x="-5" y="-5" width="121.600" height="73" fill="url(#cw)"/><rect x="93" y="0" width="18.600" height="63" fill="#ecebe8"/><rect x="96" y="8" width="15.600" height="30" fill="#d9cfc6"/><rect x="97.500" y="10" width="14" height="8" fill="#e9e2da"/><rect x="97.500" y="20" width="14" height="8" fill="#e6dfd7"/><rect x="97.500" y="30" width="14" height="7" fill="#e9e2da"/><circle cx="106" cy="26" r="1.200" fill="#b9756a"/><rect x="100.500" y="39" width="1.500" height="3" fill="#6a6a72"/><rect x="88" y="54" width="24" height="2" fill="#c9c6c0"/><rect x="84" y="57" width="28" height="6" fill="#e1dfdb"/><rect x="70" y="29" width="21" height="20" rx="2" fill="#b9cfe1"/><rect x="72" y="46" width="18" height="10" fill="#c9d6e2"/><rect x="32" y="16" width="15" height="26" fill="#3b424f"/><rect x="36.500" y="16" width="2" height="26" fill="#555d6c"/><path d="M5 50l4-6 2 3 3-5 2 5 4-2-2 6z" fill="#4f8a4a"/><rect x="8" y="49" width="8" height="4" fill="#c9c9c9"/><path d="M0 63v-10q10-6 22-8l14-7q6-3 12-4l18 0q8 3 11 10l5 19z" fill="#3c4351"/><path d="M0 63v-8q10-5 20-6l8 14z" fill="#464d5c"/><path d="M42 63v-22l6-3h14l6 5v20z" fill="#8c8d93"/><path d="M42 39l6-2 1 8-7 3z" fill="#eceef0"/><ellipse cx="58" cy="29" rx="11" ry="12.500" fill="#a47c6c"/><path d="M46.500 27q-1-11 11-11.500 13 0 12 12l-2-4q-8-4-19-1z" fill="#39332f"/><path d="M68 26q2 0 1.500 4t-2 3z" fill="#946c5c"/><path d="M52 40q6-3 12 0l2 8q-1 5-7 5t-7-6z" fill="#a88272"/><ellipse cx="58" cy="36" rx="4" ry="1.200" fill="#8a5a52"/></g></g></svg>
<div class="a" style="left:913px;top:17.6px;width:68px;height:16px;background:#e9f4fd;border-radius:3px;box-shadow:0 0 1px rgba(120,170,220,0.8);"></div>
<div class="a" style="left:913px;top:17.6px;width:19px;height:16px;background:#1d8fea;border-radius:3px 0 0 3px;"></div>
<svg style="left:916.500px;top:20.500px" width="12" height="10" viewBox="0 0 12 10"><g fill="none" stroke="#fff" stroke-width="1.500"><circle cx="6" cy="3.200" r="2"/><circle cx="3" cy="6.500" r="2"/><circle cx="9" cy="6.500" r="2"/></g></svg>
<div class="a" style="top:21.35px;font-size:6.3px;line-height:8.3px;color:#3b8bd3;white-space:nowrap;left:805.5px;width:300px;text-align:center;">拖拽上传</div>
</div></div>
</body></html>
